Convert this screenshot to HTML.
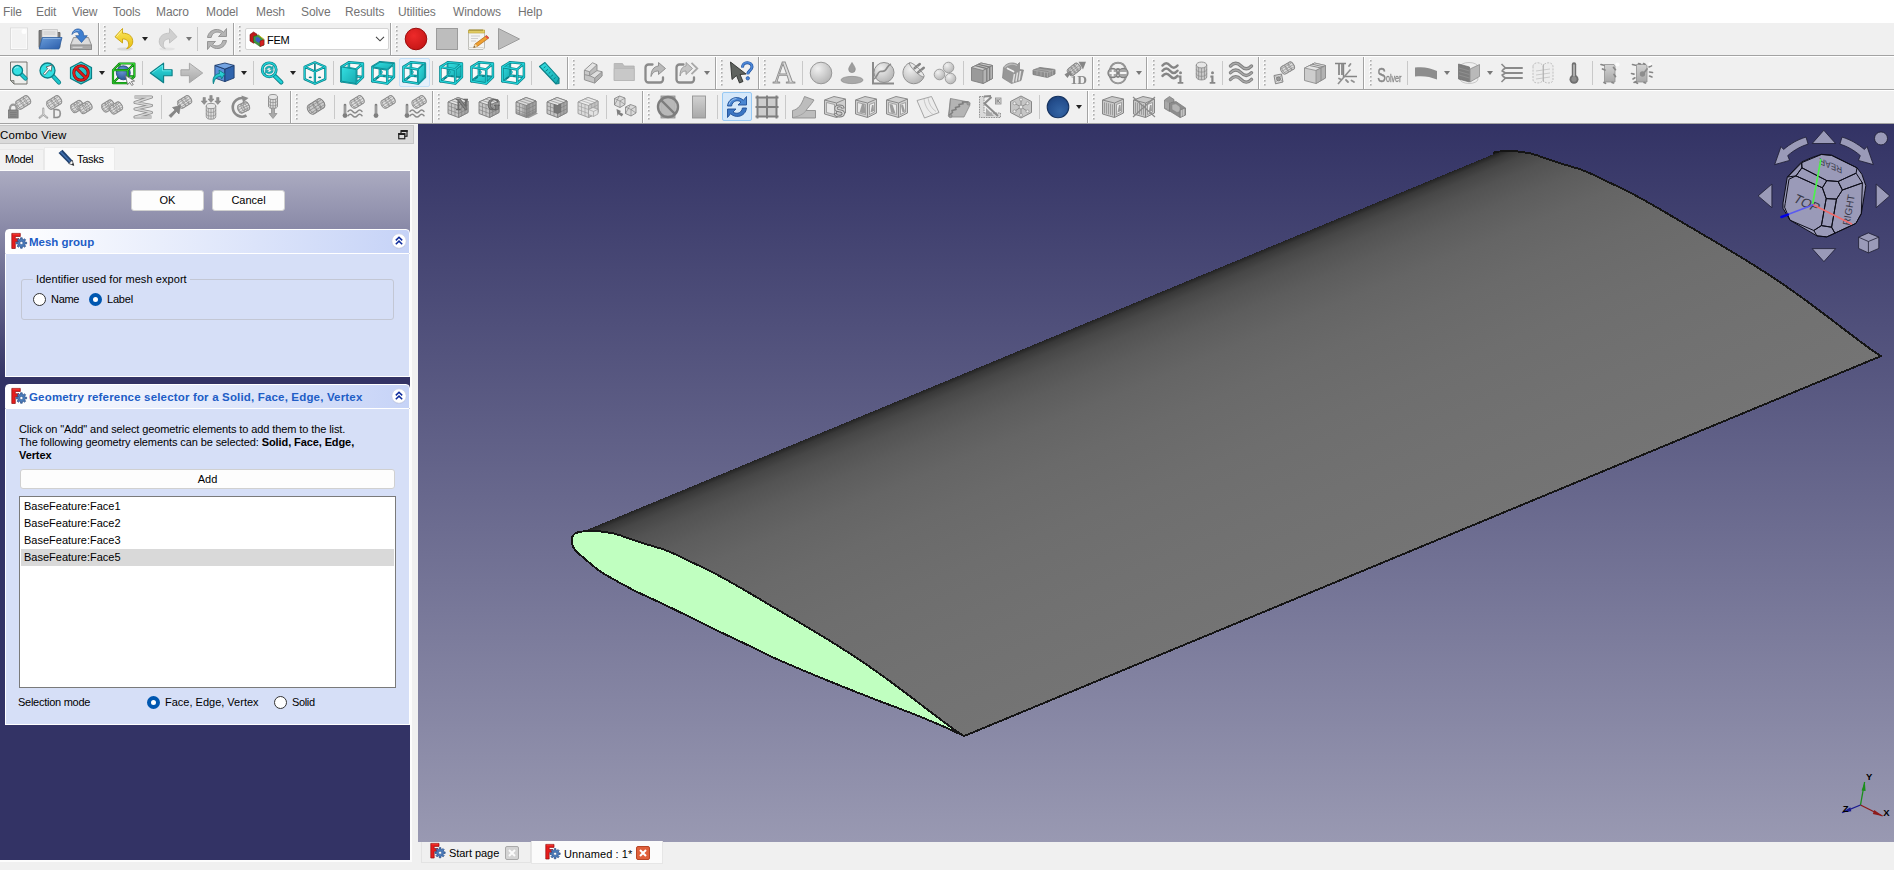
<!DOCTYPE html>
<html><head><meta charset="utf-8"><title>FreeCAD</title>
<style>
html,body{margin:0;padding:0}
body{width:1894px;height:870px;position:relative;overflow:hidden;background:#f0f0f0;font-family:"Liberation Sans",sans-serif;font-size:11px;color:#000}
.abs{position:absolute}
#menubar{position:absolute;left:0;top:0;width:1894px;height:23px;background:#fff}
#menubar span{position:absolute;top:5px;font-size:12px;color:#737373;white-space:nowrap;letter-spacing:-0.1px}
.hline{position:absolute;left:0;width:1894px;height:1px}
.vsep{position:absolute;width:1px;background:#c9c9c9}
.tbend{position:absolute;width:1px;background:#a3a3a3;box-shadow:1px 0 0 #fff}
.handle{position:absolute;width:3px;height:27px}
.ico{position:absolute;width:24px;height:24px;overflow:visible;will-change:transform}
.dd{position:absolute;width:0;height:0;border-left:3.5px solid transparent;border-right:3.5px solid transparent;border-top:4px solid #222}
.dd.g{border-top-color:#777}
.t{position:absolute;white-space:nowrap;line-height:13px}
</style></head><body>
<style>
.btn{position:absolute;box-sizing:border-box;background:#fdfdfd;border:1px solid #d0d0d0;border-radius:3px;text-align:center;line-height:19px;font-size:11px}
.ghead{position:absolute;left:5px;width:405px;height:25px;box-sizing:border-box;border:1px solid #fff;border-radius:4px 4px 0 0;background:linear-gradient(to right,#fff 0,#c6d3f7 100%)}
.ghead span{position:absolute;top:6px;font-weight:bold;color:#215dc6;font-size:11.5px;white-space:nowrap}
.gcont{position:absolute;left:5px;width:405px;box-sizing:border-box;background:#d6dff7;border:1px solid #fff;border-top:none}
.radio{position:absolute;width:13px;height:13px;box-sizing:border-box;border-radius:50%;border:1px solid #333;background:#fff}
.radio.on{border:4px solid #0057b0;background:#fff}
.li{font-size:11px}
</style>
<div id="menubar">
<span style="left:3px">File</span><span style="left:36px">Edit</span><span style="left:72px">View</span><span style="left:113px">Tools</span><span style="left:156px">Macro</span><span style="left:206px">Model</span><span style="left:256px">Mesh</span><span style="left:301px">Solve</span><span style="left:345px">Results</span><span style="left:398px">Utilities</span><span style="left:453px">Windows</span><span style="left:518px">Help</span>
</div>
<div class="hline" style="top:55px;background:#a3a3a3"></div><div class="hline" style="top:56px;background:#fff"></div>
<div class="hline" style="top:89px;background:#a3a3a3"></div><div class="hline" style="top:90px;background:#fff"></div>
<div class="hline" style="top:123px;background:#a3a3a3"></div><div class="hline" style="top:124px;background:#f7f7f7"></div>
<svg width="0" height="0" style="position:absolute"><defs>
<linearGradient id="gCy" x1="0" y1="0" x2="1" y2="1"><stop offset="0" stop-color="#34e0e2"/><stop offset="1" stop-color="#16a9b0"/></linearGradient>
<linearGradient id="gCyV" x1="0" y1="0" x2="0" y2="1"><stop offset="0" stop-color="#34e0e2"/><stop offset="1" stop-color="#12a5ad"/></linearGradient>
<linearGradient id="gBl" x1="0" y1="0" x2="1" y2="1"><stop offset="0" stop-color="#6a9edb"/><stop offset="1" stop-color="#2a5caa"/></linearGradient>
<linearGradient id="gGr" x1="0" y1="0" x2="0" y2="1"><stop offset="0" stop-color="#d2d2d2"/><stop offset="1" stop-color="#a8a8a8"/></linearGradient>
<linearGradient id="gGr2" x1="0" y1="0" x2="1" y2="1"><stop offset="0" stop-color="#e4e4e4"/><stop offset="1" stop-color="#a9a9a9"/></linearGradient>
<linearGradient id="gYe" x1="0" y1="0" x2="0" y2="1"><stop offset="0" stop-color="#fbe75a"/><stop offset="1" stop-color="#e8bd12"/></linearGradient>
<radialGradient id="gRed" cx="0.4" cy="0.35" r="0.7"><stop offset="0" stop-color="#ee2a2a"/><stop offset="1" stop-color="#c41616"/></radialGradient>
<radialGradient id="gSph" cx="0.35" cy="0.3" r="0.75"><stop offset="0" stop-color="#f0f0f0"/><stop offset="1" stop-color="#b4b4b4"/></radialGradient>
<radialGradient id="gBSph" cx="0.6" cy="0.7" r="0.8"><stop offset="0" stop-color="#3465a4"/><stop offset="0.6" stop-color="#25508f"/><stop offset="1" stop-color="#1b3f78"/></radialGradient>
<radialGradient id="gBSph2" cx="0.4" cy="0.35" r="0.7"><stop offset="0" stop-color="#6f9bd8"/><stop offset="1" stop-color="#24508f"/></radialGradient>
</defs></svg>
<svg class="ico" style="left:7px;top:27px" viewBox="0 0 24 24"><rect x="3.5" y="1" width="17" height="21.5" fill="#f3f3f3" stroke="#dcdcdc"/><rect x="4.5" y="2" width="15" height="19.5" fill="none" stroke="#fafafa"/><circle cx="17" cy="4.5" r="2.5" fill="#fff" opacity=".9"/></svg>
<svg class="ico" style="left:38px;top:27px" viewBox="0 0 24 24"><path d="M1 3.5h7l1.5 2H22v15H1z" fill="#7d7d7d" stroke="#5f5f5f" stroke-width=".8"/><path d="M4 2.5h15.5v14H4z" fill="#e6e6e6" stroke="#b5b5b5" stroke-width=".6"/><path d="M5.5 5h12M5.5 7h12" stroke="#c4c4c4" stroke-width=".8"/><path d="M4.2 10.5H24l-3 11.5H1.2z" fill="url(#gBl)" stroke="#2f5f9f" stroke-width=".8"/><path d="M5 11.5h17.6" stroke="#9cc0ea" stroke-width=".8"/></svg>
<svg class="ico" style="left:69px;top:27px" viewBox="0 0 24 24"><path d="M4.5 10.5h15L22.5 18v4.5h-21V18z" fill="#cfcfcf" stroke="#8e8e8e" stroke-width=".9"/><path d="M1.5 18h21v4.5h-21z" fill="#a9a9a9" stroke="#8a8a8a" stroke-width=".9"/><path d="M3.5 20.3h10" stroke="#ddd" stroke-width="1"/><path d="M5.5 11.5h13l2.3 5.5H3.2z" fill="#dcdcdc"/><path d="M3 7.5C3.5 3 8 0.8 11.5 2.5c2.3 1.2 3.2 3.3 3.2 6.2h3.6L12.5 15.5 6.6 8.7h3.6c0-2.3-1-3.7-2.7-3.7C5.6 5 4 6 3 7.5z" fill="#3f7fd0" stroke="#285a9e" stroke-width=".7"/><path d="M4.5 5.5C6 3.5 8.5 3 10.5 3.8" stroke="#8db6ea" stroke-width=".8" fill="none"/></svg>
<div class="tbend" style="left:98px;top:23px;height:32px"></div>
<svg class="handle" style="left:103px;top:25px" viewBox="0 0 3 27" ><rect x="0" y="0" width="2" height="2" fill="#fbfbfb"/><rect x="1" y="1" width="1.600" height="1.600" fill="#adadad"/><rect x="0" y="4" width="2" height="2" fill="#fbfbfb"/><rect x="1" y="5" width="1.600" height="1.600" fill="#adadad"/><rect x="0" y="8" width="2" height="2" fill="#fbfbfb"/><rect x="1" y="9" width="1.600" height="1.600" fill="#adadad"/><rect x="0" y="12" width="2" height="2" fill="#fbfbfb"/><rect x="1" y="13" width="1.600" height="1.600" fill="#adadad"/><rect x="0" y="16" width="2" height="2" fill="#fbfbfb"/><rect x="1" y="17" width="1.600" height="1.600" fill="#adadad"/><rect x="0" y="20" width="2" height="2" fill="#fbfbfb"/><rect x="1" y="21" width="1.600" height="1.600" fill="#adadad"/><rect x="0" y="24" width="2" height="2" fill="#fbfbfb"/><rect x="1" y="25" width="1.600" height="1.600" fill="#adadad"/></svg>
<svg class="ico" style="left:111.7px;top:27px" viewBox="0 0 24 24"><ellipse cx="13" cy="22" rx="8" ry="1.6" fill="#000" opacity=".1"/><path d="M10.5 1.5 3 9.8l7.5 6.2v-4c3.5-.3 6 1.5 6.2 5.2.1 1.8-.6 3.3-2 4.5 4.3-1.3 6.3-4.2 6-8-.4-4.7-4.3-7.6-10.200-7.500z" fill="url(#gYe)" stroke="#c9a109" stroke-width=".9" stroke-linejoin="round"/><path d="M10 3.300 4.500 9.700" stroke="#fff6a8" stroke-width=".8"/></svg>
<div class="dd" style="left:142px;top:37px"></div>
<svg class="ico" style="left:155.5px;top:27px" viewBox="0 0 24 24"><g transform="translate(24,0) scale(-1,1)" opacity=".9"><ellipse cx="13" cy="22" rx="8" ry="1.6" fill="#000" opacity=".06"/><path d="M10.5 1.5 3 9.8l7.5 6.2v-4c3.5-.3 6 1.5 6.2 5.2.1 1.8-.6 3.3-2 4.500 4.300-1.300 6.300-4.200 6-8-.4-4.700-4.300-7.600-10.200-7.500z" fill="#cdcdcd" stroke="#b9b9b9" stroke-width=".9" stroke-linejoin="round"/></g></svg>
<div class="dd g" style="left:185.5px;top:37px"></div>
<div class="vsep" style="left:197px;top:27px;height:24px"></div>
<svg class="ico" style="left:204.8px;top:27px" viewBox="0 0 24 24"><path d="M21.500 1.500v8h-8l2.900-2.900c-2.600-2.300-6.700-1.900-8.900.9-.7.900-1.100 1.900-1.300 3H2.500C3 6.500 6 3.300 10 2.600c3.200-.6 6.300.5 8.600 2.700z" fill="#b4b4b4" stroke="#8f8f8f" stroke-width=".9" stroke-linejoin="round"/><path d="M2.500 22.500v-8h8l-2.900 2.900c2.600 2.300 6.700 1.900 8.900-.9.700-.9 1.100-1.900 1.300-3h3.700c-.5 4-3.500 7.200-7.500 7.900-3.200.6-6.300-.5-8.600-2.700z" fill="#b4b4b4" stroke="#8f8f8f" stroke-width=".9" stroke-linejoin="round"/></svg>
<div class="tbend" style="left:233px;top:23px;height:32px"></div>
<svg class="handle" style="left:238px;top:25px" viewBox="0 0 3 27" ><rect x="0" y="0" width="2" height="2" fill="#fbfbfb"/><rect x="1" y="1" width="1.600" height="1.600" fill="#adadad"/><rect x="0" y="4" width="2" height="2" fill="#fbfbfb"/><rect x="1" y="5" width="1.600" height="1.600" fill="#adadad"/><rect x="0" y="8" width="2" height="2" fill="#fbfbfb"/><rect x="1" y="9" width="1.600" height="1.600" fill="#adadad"/><rect x="0" y="12" width="2" height="2" fill="#fbfbfb"/><rect x="1" y="13" width="1.600" height="1.600" fill="#adadad"/><rect x="0" y="16" width="2" height="2" fill="#fbfbfb"/><rect x="1" y="17" width="1.600" height="1.600" fill="#adadad"/><rect x="0" y="20" width="2" height="2" fill="#fbfbfb"/><rect x="1" y="21" width="1.600" height="1.600" fill="#adadad"/><rect x="0" y="24" width="2" height="2" fill="#fbfbfb"/><rect x="1" y="25" width="1.600" height="1.600" fill="#adadad"/></svg>
<div class="abs" style="left:245px;top:28px;width:144px;height:22px;box-sizing:border-box;background:#fff;border:1px solid #d4d4d4;border-radius:2px"></div>
<svg class="abs" style="left:249px;top:31px" width="16" height="16" viewBox="0 0 16 16"><path d="M1 3.500 4.500 1 8 3.200v7L4.500 12.200 1 10z" fill="#c01818" stroke="#7a0c0c" stroke-width=".6"/><path d="M4.500 5.500 9.500 4l5.500 4.500v5.500l-4 1.500L4.500 11z" fill="#3d9a3d" stroke="#1f5a1f" stroke-width=".5"/><path d="M6.500 6.500 9 6l2.500 2v3l-2 .8-3-2z" fill="#3a62c4"/><path d="M11 10l4-1.500v5.500l-4 1.500z" fill="#d42020" stroke="#7a0c0c" stroke-width=".5"/><path d="M9.500 4 15 8.500" stroke="#e8c020" stroke-width=".8"/></svg>
<div class="t" style="left:267px;top:34px;font-size:11px;letter-spacing:-.25px">FEM</div>
<svg class="abs" style="left:375px;top:35px" width="10" height="8" viewBox="0 0 10 8"><path d="M1 1.800 5 5.800 9 1.800" fill="none" stroke="#444" stroke-width="1.100"/></svg>
<div class="tbend" style="left:390px;top:23px;height:32px"></div>
<svg class="handle" style="left:395px;top:25px" viewBox="0 0 3 27" ><rect x="0" y="0" width="2" height="2" fill="#fbfbfb"/><rect x="1" y="1" width="1.600" height="1.600" fill="#adadad"/><rect x="0" y="4" width="2" height="2" fill="#fbfbfb"/><rect x="1" y="5" width="1.600" height="1.600" fill="#adadad"/><rect x="0" y="8" width="2" height="2" fill="#fbfbfb"/><rect x="1" y="9" width="1.600" height="1.600" fill="#adadad"/><rect x="0" y="12" width="2" height="2" fill="#fbfbfb"/><rect x="1" y="13" width="1.600" height="1.600" fill="#adadad"/><rect x="0" y="16" width="2" height="2" fill="#fbfbfb"/><rect x="1" y="17" width="1.600" height="1.600" fill="#adadad"/><rect x="0" y="20" width="2" height="2" fill="#fbfbfb"/><rect x="1" y="21" width="1.600" height="1.600" fill="#adadad"/><rect x="0" y="24" width="2" height="2" fill="#fbfbfb"/><rect x="1" y="25" width="1.600" height="1.600" fill="#adadad"/></svg>
<svg class="ico" style="left:404px;top:27px" viewBox="0 0 24 24"><circle cx="12" cy="12" r="10.800" fill="url(#gRed)" stroke="#990d0d" stroke-width="1"/></svg>
<svg class="ico" style="left:435px;top:27px" viewBox="0 0 24 24"><rect x="1.500" y="1.500" width="21" height="21" fill="#bdbdbd" stroke="#9b9b9b" stroke-width="1"/></svg>
<svg class="ico" style="left:466.3px;top:27px" viewBox="0 0 24 24"><path d="M2.500 3.500h16v17.500l-1.500 1.500H2.500z" fill="#f4f4f2" stroke="#b9b9b3" stroke-width=".9"/><path d="M2.500 3h16v3h-16z" fill="#e8d36a" stroke="#b59a2c" stroke-width=".6"/><path d="M4 2.200v2M6 2.200v2M8 2.200v2M10 2.200v2M12 2.200v2M14 2.200v2M16 2.200v2" stroke="#7c6a1c" stroke-width=".8"/><path d="M5 9h9M5 11.500h7M5 14h5" stroke="#c9c9c9" stroke-width=".9"/><path d="M2.500 20.500h15" stroke="#d8d8d2" stroke-width="1"/><path d="M20.500 8.500 23 10.800 11.500 19.300l-3.800 1.200 1.300-3.500z" fill="#f0a030" stroke="#a86414" stroke-width=".7" stroke-linejoin="round"/><path d="M20.500 8.500 23 10.800l-1.500 1.100-2.400-2.300z" fill="#e24a4a"/><path d="M7.700 20.500l1.300-3.500 2.500 2.300z" fill="#f3dfb2"/><path d="M7.700 20.500l.5-1.400 1 .9z" fill="#333"/></svg>
<svg class="ico" style="left:497px;top:27px" viewBox="0 0 24 24"><path d="M1.500 1.500 22.500 12 1.500 22.500z" fill="#bcbcbc" stroke="#9c9c9c" stroke-width="1" stroke-linejoin="round"/></svg>
<svg class="ico" style="left:7px;top:61px" viewBox="0 0 24 24"><path d="M3.500 1h16.500v22H7L3.500 19.500z" fill="#eeeeec" stroke="#666863" stroke-width=".9"/><path d="M3.500 19.500H7V23z" fill="#b9b9b5" stroke="#666863" stroke-width=".7"/><path d="M14 13 L18.5 17.5" stroke="#0b7f86" stroke-width="4.200" stroke-linecap="round"/><path d="M14 13 L18.5 17.5" stroke="#1cc5ca" stroke-width="2.600" stroke-linecap="round"/><circle cx="10.5" cy="9.5" r="5" fill="#34e0e2" stroke="#0b7f86" stroke-width="1.300"/><path d="M7.500 7.500a4 4 0 0 1 4-1.500" stroke="#b8f4f5" stroke-width="1" fill="none"/></svg>
<svg class="ico" style="left:38px;top:61px" viewBox="0 0 24 24"><path d="M14.75 14.75 L21 21.5" stroke="#0b7f86" stroke-width="4.200" stroke-linecap="round"/><path d="M14.75 14.75 L21 21.5" stroke="#1cc5ca" stroke-width="2.600" stroke-linecap="round"/><circle cx="9.5" cy="9.5" r="7.5" fill="#34e0e2" stroke="#0b7f86" stroke-width="1.300"/><path d="M14 4 13.200 10.300 11.300 8.800 6.800 14 5.300 12.700 9.800 7.500 8 6z" fill="#fff" stroke="#555" stroke-width=".8" stroke-linejoin="round"/></svg>
<svg class="ico" style="left:69px;top:61px" viewBox="0 0 24 24"><path d="M12 1 22.500 6.500v11L12 23 1.500 17.500v-11z" fill="url(#gCy)" stroke="#0b7f86" stroke-width="1.200" stroke-linejoin="round"/><path d="M12 2.500 21 7.300v9.400L12 21.500 3 16.700V7.300z" fill="none" stroke="#5eeaec" stroke-width=".6"/><circle cx="12" cy="12" r="7.200" fill="none" stroke="#7d0b0b" stroke-width="3"/><path d="M6.900 6.900 17.100 17.100" stroke="#7d0b0b" stroke-width="3"/><circle cx="12" cy="12" r="7.200" fill="none" stroke="#e31c1c" stroke-width="1.800"/><path d="M6.900 6.900 17.100 17.100" stroke="#e31c1c" stroke-width="1.800"/></svg>
<div class="dd" style="left:99px;top:71px"></div>
<svg class="ico" style="left:112.4px;top:61px" viewBox="0 0 24 24"><path d="M1 9.200 7.500 2.500H22.400V15.400L15.800 22.100H1z" fill="#fff" opacity=".55"/><path d="M7.500 2.500V15.400H22.400M7.500 15.400 1 22.100" fill="none" stroke="#0b7a0b" stroke-width="2.200" stroke-linejoin="round"/><path d="M7.500 2.500V15.400H22.400M7.500 15.400 1 22.100" fill="none" stroke="#35dc35" stroke-width=".9" stroke-linejoin="round"/><circle cx="11.300" cy="11.800" r="7" fill="url(#gBSph2)" stroke="#1b3f78" stroke-width=".8"/><path d="M1 9.200H15.800V22.100H1zM1 9.200 7.500 2.500H22.400L15.800 9.200M22.400 2.500V15.400L15.800 22.100" fill="none" stroke="#0b7a0b" stroke-width="2.200" stroke-linejoin="round"/><path d="M1 9.200H15.800V22.100H1zM1 9.200 7.500 2.500H22.400L15.800 9.200M22.400 2.500V15.400L15.800 22.100" fill="none" stroke="#35dc35" stroke-width=".9" stroke-linejoin="round"/><path d="M13.500 14.500 22.600 20 19.200 20.600 21.300 23.600 19.700 24.400 17.700 21.400 15.600 23.700z" fill="#f6f6f6" stroke="#6b6b6b" stroke-width=".8" stroke-linejoin="round"/></svg>
<div class="vsep" style="left:142px;top:61px;height:24px"></div>
<svg class="ico" style="left:149px;top:61px" viewBox="0 0 24 24"><path d="M1.300 12 14.600 2.200V8.800H23.100V14.700H14.600V21.800z" fill="url(#gCyV)" stroke="#0b7f86" stroke-width="1.100" stroke-linejoin="round"/><path d="M3.300 11.800 13.600 4.300V9.800H22" fill="none" stroke="#7af0f2" stroke-width=".7"/></svg>
<svg class="ico" style="left:179.8px;top:61px" viewBox="0 0 24 24"><path d="M22.700 12 9.400 2.200V8.800H.9V14.700H9.400V21.800z" fill="url(#gGr)" stroke="#a6a6a6" stroke-width="1" stroke-linejoin="round"/></svg>
<svg class="ico" style="left:210.7px;top:61px" viewBox="0 0 24 24"><path d="M3.900 4.400 13.900 8.100V20.600L3.900 17z" fill="#5b90d8" stroke="#1b3a6b" stroke-width=".9" stroke-linejoin="round"/><path d="M13.900 8.100 23.100 4.400V17L13.900 20.600z" fill="#2f64ad" stroke="#1b3a6b" stroke-width=".9" stroke-linejoin="round"/><path d="M3.900 4.400 13.900 2 23.100 4.400 13.900 8.100z" fill="#74a4e2" stroke="#1b3a6b" stroke-width=".9" stroke-linejoin="round"/><path d="M2.400 22.800C1 17 3.500 13.200 8.500 12.500L8 9.200 13.700 12.900 10.600 18 9.800 15.200C6 15.500 3.500 18 2.400 22.800z" fill="url(#gCyV)" stroke="#0b7f86" stroke-width=".9" stroke-linejoin="round"/></svg>
<div class="dd" style="left:241px;top:71px"></div>
<div class="vsep" style="left:253px;top:61px;height:24px"></div>
<svg class="ico" style="left:259.7px;top:61px" viewBox="0 0 24 24"><path d="M14.500 14.700 21.300 21.300" stroke="#0b7f86" stroke-width="4.400" stroke-linecap="round"/><path d="M14.500 14.700 21.300 21.300" stroke="#1fd0d5" stroke-width="2.600" stroke-linecap="round"/><circle cx="9.200" cy="8.800" r="7" fill="#eef3f3" stroke="#0b7f86" stroke-width="2.800"/><circle cx="9.200" cy="8.800" r="7" fill="none" stroke="#1fd0d5" stroke-width="1.400"/><path d="M5 8.300c.3-2.200 2.200-3.500 4.500-3.300 1 .1 1.700.4 2.400 1l1.300-1v3.500H9.800l1.100-1.100c-1.400-1-3.300-.6-3.900 1.200zM13.400 9.500c-.3 2.200-2.200 3.500-4.500 3.300-1-.1-1.700-.4-2.400-1l-1.300 1V9.300h3.400l-1.100 1.100c1.400 1 3.300.6 3.900-1.200z" fill="#14b4ba" stroke="#0b7f86" stroke-width=".4"/></svg>
<div class="dd" style="left:289.7px;top:71px"></div>
<svg class="ico" style="left:303px;top:61px" viewBox="0 0 24 24"><path d="M11.900 1.300 22.300 5.700V18.100L11.900 22.800 1.600 18.100V5.700z" fill="#fff" opacity=".55"/><path d="M11.900 2.500V10" stroke="#0b7f86" stroke-width="1.700"/><path d="M11.900 1.300 22.300 5.700V18.100L11.900 22.800 1.600 18.100V5.700zM1.600 5.700 11.900 10.500 22.300 5.700M11.900 10.500V22.800" stroke="#0b7f86" stroke-width="2.300" stroke-linejoin="round" fill="none"/><path d="M11.900 1.300 22.300 5.700V18.100L11.900 22.800 1.600 18.100V5.700zM1.600 5.700 11.900 10.500 22.300 5.700M11.900 10.500V22.800" stroke="#22d3d8" stroke-width="1" stroke-linejoin="round" fill="none"/><ellipse cx="7.300" cy="16.300" rx="1.600" ry=".9" fill="#0b7f86"/><ellipse cx="16.600" cy="16.300" rx="1.600" ry=".9" fill="#0b7f86"/></svg>
<div class="vsep" style="left:333px;top:61px;height:24px"></div>
<svg class="ico" style="left:339.8px;top:61px" viewBox="0 0 24 24"><path d="M1.4 5.9 8.9 1.3 22.9 2.5 22.9 16 16.2 22.6 1.4 20.2z" fill="#fff" opacity=".6"/><path d="M8.9 1.3 8.9 14.6M8.9 14.6 22.9 16M8.9 14.6 1.4 20.2" stroke="#0b7f86" stroke-width="2.500" stroke-linejoin="round" stroke-linecap="round" fill="none"/><path d="M8.9 1.3 8.9 14.6M8.9 14.6 22.9 16M8.9 14.6 1.4 20.2" stroke="#22d3d8" stroke-width="1.200" stroke-linejoin="round" stroke-linecap="round" fill="none"/><path d="M1.4 5.9 16.2 8.4 16.2 22.6 1.4 20.2zM1.4 5.9 8.9 1.3 22.9 2.5 16.2 8.4zM16.2 8.4 22.9 2.5 22.9 16 16.2 22.6z" stroke="#0b7f86" stroke-width="2.500" stroke-linejoin="round" stroke-linecap="round" fill="none"/><path d="M1.4 5.9 16.2 8.4 16.2 22.6 1.4 20.2zM1.4 5.9 8.9 1.3 22.9 2.5 16.2 8.4zM16.2 8.4 22.9 2.5 22.9 16 16.2 22.6z" stroke="#22d3d8" stroke-width="1.200" stroke-linejoin="round" stroke-linecap="round" fill="none"/><path d="M1.4 5.9 16.2 8.4 16.2 22.6 1.4 20.2z" fill="url(#gCy)" stroke="#0b7f86" stroke-width=".8" stroke-linejoin="round"/></svg>
<svg class="ico" style="left:371px;top:61px" viewBox="0 0 24 24"><path d="M1.4 5.9 8.9 1.3 22.9 2.5 22.9 16 16.2 22.6 1.4 20.2z" fill="#fff" opacity=".6"/><path d="M8.9 1.3 8.9 14.6M8.9 14.6 22.9 16M8.9 14.6 1.4 20.2" stroke="#0b7f86" stroke-width="2.500" stroke-linejoin="round" stroke-linecap="round" fill="none"/><path d="M8.9 1.3 8.9 14.6M8.9 14.6 22.9 16M8.9 14.6 1.4 20.2" stroke="#22d3d8" stroke-width="1.200" stroke-linejoin="round" stroke-linecap="round" fill="none"/><ellipse cx="10.300" cy="11.200" rx=".9" ry="1.700" fill="#22d3d8" stroke="#0b7f86" stroke-width=".7"/><path d="M5.300 17.700 7.300 16.300" stroke="#0b7f86" stroke-width="1.500" stroke-linecap="round"/><path d="M12 15.200h2.300" stroke="#0b7f86" stroke-width="1.400"/><path d="M1.4 5.9 16.2 8.4 16.2 22.6 1.4 20.2zM1.4 5.9 8.9 1.3 22.9 2.5 16.2 8.4zM16.2 8.4 22.9 2.5 22.9 16 16.2 22.6z" stroke="#0b7f86" stroke-width="2.500" stroke-linejoin="round" stroke-linecap="round" fill="none"/><path d="M1.4 5.9 16.2 8.4 16.2 22.6 1.4 20.2zM1.4 5.9 8.9 1.3 22.9 2.5 16.2 8.4zM16.2 8.4 22.9 2.5 22.9 16 16.2 22.6z" stroke="#22d3d8" stroke-width="1.200" stroke-linejoin="round" stroke-linecap="round" fill="none"/><path d="M1.4 5.9 8.9 1.3 22.9 2.5 16.2 8.4z" fill="url(#gCy)" stroke="#0b7f86" stroke-width=".8" stroke-linejoin="round"/></svg>
<div class="abs" style="left:398.7px;top:58px;width:31px;height:29px;box-sizing:border-box;background:#e4f0fb;border:1px solid #c4e0f8;border-radius:2px"></div>
<svg class="ico" style="left:402px;top:61px" viewBox="0 0 24 24"><path d="M1.4 5.9 8.9 1.3 22.9 2.5 22.9 16 16.2 22.6 1.4 20.2z" fill="#fff" opacity=".6"/><path d="M8.9 1.3 8.9 14.6M8.9 14.6 22.9 16M8.9 14.6 1.4 20.2" stroke="#0b7f86" stroke-width="2.500" stroke-linejoin="round" stroke-linecap="round" fill="none"/><path d="M8.9 1.3 8.9 14.6M8.9 14.6 22.9 16M8.9 14.6 1.4 20.2" stroke="#22d3d8" stroke-width="1.200" stroke-linejoin="round" stroke-linecap="round" fill="none"/><ellipse cx="10.300" cy="11.200" rx=".9" ry="1.700" fill="#22d3d8" stroke="#0b7f86" stroke-width=".7"/><path d="M5.300 17.700 7.300 16.300" stroke="#0b7f86" stroke-width="1.500" stroke-linecap="round"/><path d="M12 15.200h2.300" stroke="#0b7f86" stroke-width="1.400"/><path d="M1.4 5.9 16.2 8.4 16.2 22.6 1.4 20.2zM1.4 5.9 8.9 1.3 22.9 2.5 16.2 8.4zM16.2 8.4 22.9 2.5 22.9 16 16.2 22.6z" stroke="#0b7f86" stroke-width="2.500" stroke-linejoin="round" stroke-linecap="round" fill="none"/><path d="M1.4 5.9 16.2 8.4 16.2 22.6 1.4 20.2zM1.4 5.9 8.9 1.3 22.9 2.5 16.2 8.4zM16.2 8.4 22.9 2.5 22.9 16 16.2 22.6z" stroke="#22d3d8" stroke-width="1.200" stroke-linejoin="round" stroke-linecap="round" fill="none"/><path d="M16.2 8.4 22.9 2.5 22.9 16 16.2 22.6z" fill="url(#gCy)" stroke="#0b7f86" stroke-width=".8" stroke-linejoin="round"/></svg>
<div class="vsep" style="left:432px;top:61px;height:24px"></div>
<svg class="ico" style="left:438.6px;top:61px" viewBox="0 0 24 24"><path d="M1.4 5.9 8.9 1.3 22.9 2.5 22.9 16 16.2 22.6 1.4 20.2z" fill="#fff" opacity=".6"/><path d="M8.9 1.3 8.9 14.6M8.9 14.6 22.9 16M8.9 14.6 1.4 20.2" stroke="#0b7f86" stroke-width="2.500" stroke-linejoin="round" stroke-linecap="round" fill="none"/><path d="M8.9 1.3 8.9 14.6M8.9 14.6 22.9 16M8.9 14.6 1.4 20.2" stroke="#22d3d8" stroke-width="1.200" stroke-linejoin="round" stroke-linecap="round" fill="none"/><path d="M8.9 1.3 22.9 2.5 22.9 16 8.9 14.6z" fill="url(#gCy)" stroke="#0b7f86" stroke-width=".8" stroke-linejoin="round"/><ellipse cx="10.300" cy="11.200" rx=".9" ry="1.700" fill="#22d3d8" stroke="#0b7f86" stroke-width=".7"/><path d="M5.300 17.700 7.300 16.300" stroke="#0b7f86" stroke-width="1.500" stroke-linecap="round"/><path d="M12 15.200h2.300" stroke="#0b7f86" stroke-width="1.400"/><path d="M1.4 5.9 16.2 8.4 16.2 22.6 1.4 20.2zM1.4 5.9 8.9 1.3 22.9 2.5 16.2 8.4zM16.2 8.4 22.9 2.5 22.9 16 16.2 22.6z" stroke="#0b7f86" stroke-width="2.500" stroke-linejoin="round" stroke-linecap="round" fill="none"/><path d="M1.4 5.9 16.2 8.4 16.2 22.6 1.4 20.2zM1.4 5.9 8.9 1.3 22.9 2.5 16.2 8.4zM16.2 8.4 22.9 2.5 22.9 16 16.2 22.6z" stroke="#22d3d8" stroke-width="1.200" stroke-linejoin="round" stroke-linecap="round" fill="none"/></svg>
<svg class="ico" style="left:469.8px;top:61px" viewBox="0 0 24 24"><path d="M1.4 5.9 8.9 1.3 22.9 2.5 22.9 16 16.2 22.6 1.4 20.2z" fill="#fff" opacity=".6"/><path d="M8.9 1.3 8.9 14.6M8.9 14.6 22.9 16M8.9 14.6 1.4 20.2" stroke="#0b7f86" stroke-width="2.500" stroke-linejoin="round" stroke-linecap="round" fill="none"/><path d="M8.9 1.3 8.9 14.6M8.9 14.6 22.9 16M8.9 14.6 1.4 20.2" stroke="#22d3d8" stroke-width="1.200" stroke-linejoin="round" stroke-linecap="round" fill="none"/><path d="M1.4 20.2 8.9 14.6 22.9 16 16.2 22.6z" fill="url(#gCy)" stroke="#0b7f86" stroke-width=".8" stroke-linejoin="round"/><ellipse cx="10.300" cy="11.200" rx=".9" ry="1.700" fill="#22d3d8" stroke="#0b7f86" stroke-width=".7"/><path d="M5.300 17.700 7.300 16.300" stroke="#0b7f86" stroke-width="1.500" stroke-linecap="round"/><path d="M12 15.200h2.300" stroke="#0b7f86" stroke-width="1.400"/><path d="M1.4 5.9 16.2 8.4 16.2 22.6 1.4 20.2zM1.4 5.9 8.9 1.3 22.9 2.5 16.2 8.4zM16.2 8.4 22.9 2.5 22.9 16 16.2 22.6z" stroke="#0b7f86" stroke-width="2.500" stroke-linejoin="round" stroke-linecap="round" fill="none"/><path d="M1.4 5.9 16.2 8.4 16.2 22.6 1.4 20.2zM1.4 5.9 8.9 1.3 22.9 2.5 16.2 8.4zM16.2 8.4 22.9 2.5 22.9 16 16.2 22.6z" stroke="#22d3d8" stroke-width="1.200" stroke-linejoin="round" stroke-linecap="round" fill="none"/></svg>
<svg class="ico" style="left:501px;top:61px" viewBox="0 0 24 24"><path d="M1.4 5.9 8.9 1.3 22.9 2.5 22.9 16 16.2 22.6 1.4 20.2z" fill="#fff" opacity=".6"/><path d="M8.9 1.3 8.9 14.6M8.9 14.6 22.9 16M8.9 14.6 1.4 20.2" stroke="#0b7f86" stroke-width="2.500" stroke-linejoin="round" stroke-linecap="round" fill="none"/><path d="M8.9 1.3 8.9 14.6M8.9 14.6 22.9 16M8.9 14.6 1.4 20.2" stroke="#22d3d8" stroke-width="1.200" stroke-linejoin="round" stroke-linecap="round" fill="none"/><path d="M1.4 5.9 8.9 1.3 8.9 14.6 1.4 20.2z" fill="url(#gCy)" stroke="#0b7f86" stroke-width=".8" stroke-linejoin="round"/><ellipse cx="10.300" cy="11.200" rx=".9" ry="1.700" fill="#22d3d8" stroke="#0b7f86" stroke-width=".7"/><path d="M5.300 17.700 7.300 16.300" stroke="#0b7f86" stroke-width="1.500" stroke-linecap="round"/><path d="M12 15.200h2.300" stroke="#0b7f86" stroke-width="1.400"/><path d="M1.4 5.9 16.2 8.4 16.2 22.6 1.4 20.2zM1.4 5.9 8.9 1.3 22.9 2.5 16.2 8.4zM16.2 8.4 22.9 2.5 22.9 16 16.2 22.6z" stroke="#0b7f86" stroke-width="2.500" stroke-linejoin="round" stroke-linecap="round" fill="none"/><path d="M1.4 5.9 16.2 8.4 16.2 22.6 1.4 20.2zM1.4 5.9 8.9 1.3 22.9 2.5 16.2 8.4zM16.2 8.4 22.9 2.5 22.9 16 16.2 22.6z" stroke="#22d3d8" stroke-width="1.200" stroke-linejoin="round" stroke-linecap="round" fill="none"/></svg>
<div class="vsep" style="left:531px;top:61px;height:24px"></div>
<svg class="ico" style="left:536.6px;top:61px" viewBox="0 0 24 24"><path d="M2.500 5.500 8 1.500 22 17v5.500l-3 .5z" fill="url(#gCy)" stroke="#0b7f86" stroke-width="1.100" stroke-linejoin="round"/><path d="M19 23l3-5.800" stroke="#0b7f86" stroke-width=".9"/><path d="M8.500 5.500 6.700 7M11 8.300 8.500 10.300M13.500 11 11.700 12.500M16 13.800 13.500 15.800M18.500 16.600 16.700 18" stroke="#0b7f86" stroke-width="1"/></svg>
<div class="tbend" style="left:567px;top:57px;height:32px"></div>
<svg class="handle" style="left:572px;top:59px" viewBox="0 0 3 27" ><rect x="0" y="0" width="2" height="2" fill="#fbfbfb"/><rect x="1" y="1" width="1.600" height="1.600" fill="#adadad"/><rect x="0" y="4" width="2" height="2" fill="#fbfbfb"/><rect x="1" y="5" width="1.600" height="1.600" fill="#adadad"/><rect x="0" y="8" width="2" height="2" fill="#fbfbfb"/><rect x="1" y="9" width="1.600" height="1.600" fill="#adadad"/><rect x="0" y="12" width="2" height="2" fill="#fbfbfb"/><rect x="1" y="13" width="1.600" height="1.600" fill="#adadad"/><rect x="0" y="16" width="2" height="2" fill="#fbfbfb"/><rect x="1" y="17" width="1.600" height="1.600" fill="#adadad"/><rect x="0" y="20" width="2" height="2" fill="#fbfbfb"/><rect x="1" y="21" width="1.600" height="1.600" fill="#adadad"/><rect x="0" y="24" width="2" height="2" fill="#fbfbfb"/><rect x="1" y="25" width="1.600" height="1.600" fill="#adadad"/></svg>
<svg class="ico" style="left:580.9px;top:61px" viewBox="0 0 24 24"><path d="M3.400 9.200 11.500 1.800 16 3.700 8.600 10.700z" fill="#e4e4e4"/><path d="M3.400 9.200 8.600 10.700V14.700L3.400 13.600z" fill="#c9c9c9"/><path d="M8.600 10.700 16 3.700V9.600L8.600 14.700z" fill="#bbb"/><path d="M8.600 14.700 16 9.600 21.100 10.700 13.700 17z" fill="#dedede"/><path d="M3.400 13.600 8.600 14.700 13.700 17V22.100L3.400 18.800z" fill="#c4c4c4"/><path d="M13.700 17 21.100 10.700V15.100L13.700 22.100z" fill="#b0b0b0"/><path d="M3.400 9.200 11.500 1.800 16 3.700V9.600L21.100 10.700V15.100L13.700 22.100 3.400 18.800zM3.400 9.200 8.600 10.700 16 3.700M8.600 10.700V14.700L16 9.600M3.400 13.600 8.600 14.700 13.700 17 21.100 10.700M13.700 17V22.100" fill="none" stroke="#8b8b8b" stroke-width=".9" stroke-linejoin="round"/></svg>
<svg class="ico" style="left:611.6px;top:61px" viewBox="0 0 24 24"><path d="M2.200 2.500h8.300l1.500 2.500h10.200v14.500h-20z" fill="#bdbdbd" stroke="#b0b0b0" stroke-width=".8"/><path d="M2.200 7.500h20v12h-20z" fill="#c8c8c8" stroke="#b4b4b4" stroke-width=".7"/></svg>
<svg class="ico" style="left:642.7px;top:61px" viewBox="0 0 24 24"><path d="M9.500 3.500H5.500a3 3 0 0 0-3 3V18.500a3 3 0 0 0 3 3H17a3 3 0 0 0 3-3V16.500" fill="none" stroke="#8a8a8a" stroke-width="2.300" stroke-linecap="round"/><path d="M15.500 1.500 22.500 7.500 15.500 13.500V10c-4 0-6 1.500-7.500 5.500 0-6 2.500-10 7.500-10.500z" fill="#b9b9b9" stroke="#8a8a8a" stroke-width=".9" stroke-linejoin="round"/></svg>
<svg class="ico" style="left:674px;top:61px" viewBox="0 0 24 24"><path d="M9.500 3.500H5.500a3 3 0 0 0-3 3V18.500a3 3 0 0 0 3 3H17a3 3 0 0 0 3-3V16.500" fill="none" stroke="#8a8a8a" stroke-width="2.300" stroke-linecap="round"/><path d="M12 1.500 18.500 7.500 12 13.500V10c-3.500 0-5 1.500-6 5 0-6 2-9.500 6-10z" fill="#c4c4c4" stroke="#9a9a9a" stroke-width=".9" stroke-linejoin="round"/><path d="M17.500 1.800 23.300 7.500 17.500 13.200" fill="none" stroke="#a8a8a8" stroke-width="1.800"/></svg>
<div class="dd g" style="left:703.5px;top:71px"></div>
<div class="tbend" style="left:715px;top:57px;height:32px"></div>
<svg class="handle" style="left:720px;top:59px" viewBox="0 0 3 27" ><rect x="0" y="0" width="2" height="2" fill="#fbfbfb"/><rect x="1" y="1" width="1.600" height="1.600" fill="#adadad"/><rect x="0" y="4" width="2" height="2" fill="#fbfbfb"/><rect x="1" y="5" width="1.600" height="1.600" fill="#adadad"/><rect x="0" y="8" width="2" height="2" fill="#fbfbfb"/><rect x="1" y="9" width="1.600" height="1.600" fill="#adadad"/><rect x="0" y="12" width="2" height="2" fill="#fbfbfb"/><rect x="1" y="13" width="1.600" height="1.600" fill="#adadad"/><rect x="0" y="16" width="2" height="2" fill="#fbfbfb"/><rect x="1" y="17" width="1.600" height="1.600" fill="#adadad"/><rect x="0" y="20" width="2" height="2" fill="#fbfbfb"/><rect x="1" y="21" width="1.600" height="1.600" fill="#adadad"/><rect x="0" y="24" width="2" height="2" fill="#fbfbfb"/><rect x="1" y="25" width="1.600" height="1.600" fill="#adadad"/></svg>
<svg class="ico" style="left:729px;top:61px" viewBox="0 0 24 24"><path d="M1.500 1 3 18.500 7.500 14.500 10.500 22 14 20.500 11 13.500 17 13z" fill="#5f635f" stroke="#2e302e" stroke-width=".9" stroke-linejoin="round"/><path d="M13.500 6.500c0-3 2-4.800 4.800-4.800 2.700 0 4.700 1.700 4.700 4.200 0 3.300-4.200 3.600-4.200 7.300" fill="none" stroke="#1d4e9a" stroke-width="3"/><path d="M13.500 6.500c0-3 2-4.800 4.800-4.800 2.700 0 4.700 1.700 4.700 4.200 0 3.300-4.200 3.600-4.200 7.300" fill="none" stroke="#4c86d6" stroke-width="1.700"/><circle cx="18.800" cy="17.300" r="1.700" fill="#4c86d6" stroke="#1d4e9a" stroke-width=".7"/></svg>
<div class="tbend" style="left:758px;top:57px;height:32px"></div>
<svg class="handle" style="left:763px;top:59px" viewBox="0 0 3 27" ><rect x="0" y="0" width="2" height="2" fill="#fbfbfb"/><rect x="1" y="1" width="1.600" height="1.600" fill="#adadad"/><rect x="0" y="4" width="2" height="2" fill="#fbfbfb"/><rect x="1" y="5" width="1.600" height="1.600" fill="#adadad"/><rect x="0" y="8" width="2" height="2" fill="#fbfbfb"/><rect x="1" y="9" width="1.600" height="1.600" fill="#adadad"/><rect x="0" y="12" width="2" height="2" fill="#fbfbfb"/><rect x="1" y="13" width="1.600" height="1.600" fill="#adadad"/><rect x="0" y="16" width="2" height="2" fill="#fbfbfb"/><rect x="1" y="17" width="1.600" height="1.600" fill="#adadad"/><rect x="0" y="20" width="2" height="2" fill="#fbfbfb"/><rect x="1" y="21" width="1.600" height="1.600" fill="#adadad"/><rect x="0" y="24" width="2" height="2" fill="#fbfbfb"/><rect x="1" y="25" width="1.600" height="1.600" fill="#adadad"/></svg>
<svg class="ico" style="left:772px;top:61px" viewBox="0 0 24 24"><text x="12" y="22.300" text-anchor="middle" font-family="Liberation Serif,serif" font-size="31" fill="#dcdcdc" stroke="#8f8f8f" stroke-width=".9">A</text></svg>
<div class="vsep" style="left:802px;top:61px;height:24px"></div>
<svg class="ico" style="left:809px;top:61px" viewBox="0 0 24 24"><circle cx="12" cy="12" r="10.800" fill="url(#gSph)" stroke="#979797" stroke-width="1"/></svg>
<svg class="ico" style="left:840px;top:61px" viewBox="0 0 24 24"><ellipse cx="12" cy="19" rx="11" ry="3.600" fill="#a9a9a9" stroke="#909090" stroke-width=".8"/><path d="M12 1.500c2 3.200 3.300 5 3.300 6.800a3.300 3.300 0 0 1-6.600 0c0-1.800 1.300-3.600 3.300-6.800z" fill="#9d9d9d" stroke="#8a8a8a" stroke-width=".7"/></svg>
<svg class="ico" style="left:871px;top:61px" viewBox="0 0 24 24"><circle cx="13" cy="11.500" r="10" fill="url(#gSph)" stroke="#8f8f8f" stroke-width="1"/><path d="M2 1v21.500h21" fill="none" stroke="#8b8b8b" stroke-width="2"/><path d="M3 18c3-1 3.500-7 6-7.500s3 .5 5-1 2.500-5 6-6.500" fill="none" stroke="#8b8b8b" stroke-width="1.700"/></svg>
<svg class="ico" style="left:902px;top:61px" viewBox="0 0 24 24"><path d="M7.600 1.800A10.900 10.900 0 1 0 22 15.800z" fill="url(#gSph)" stroke="#8f8f8f" stroke-width="1"/><ellipse cx="14.800" cy="8.800" rx="10" ry="2.300" transform="rotate(44 14.800 8.800)" fill="#e9e9e9" stroke="#8f8f8f" stroke-width=".9"/><path d="M12.600 7.200 17.800 3M16.300 11.200 21.800 6.800" stroke="#858585" stroke-width="2.500" stroke-linecap="round"/><path d="M13.600 6.400 14.600 7.600M15.300 5 16.300 6.200M17.500 10.200 18.500 11.400M19.300 8.800 20.300 10" stroke="#cfcfcf" stroke-width=".7"/></svg>
<svg class="ico" style="left:933px;top:61px" viewBox="0 0 24 24"><circle cx="15.500" cy="6.500" r="5.300" fill="url(#gSph)" stroke="#979797" stroke-width=".9"/><circle cx="6.500" cy="13.500" r="5.300" fill="url(#gSph)" stroke="#979797" stroke-width=".9"/><circle cx="17.500" cy="17.500" r="5.300" fill="url(#gSph)" stroke="#979797" stroke-width=".9"/></svg>
<div class="vsep" style="left:963px;top:61px;height:24px"></div>
<svg class="ico" style="left:970px;top:61px" viewBox="0 0 24 24"><path d="M1.500 6.500 11 2 22.500 4.500V17.500L13 22.500 1.500 19.500z" fill="#9a9a9a" stroke="#7d7d7d" stroke-width=".9" stroke-linejoin="round"/><path d="M1.500 6.500 11 2 22.500 4.500 13 9.500z" fill="#cfcfcf" stroke="#7d7d7d" stroke-width=".8"/><path d="M13 9.500 22.500 4.500V17.500L13 22.500z" fill="#b4b4b4" stroke="#7d7d7d" stroke-width=".8"/><path d="M5.300 4.700 16.800 7.500V20.500M8.200 3.300 19.700 6V19" fill="none" stroke="#7d7d7d" stroke-width="1.300"/></svg>
<svg class="ico" style="left:1001px;top:61px" viewBox="0 0 24 24"><path d="M2.500 6.500C5 2 12 .5 16.500 3.500L18.500 1.500V8.500L22.500 9 20 19.500 10.500 22.500 1.500 17z" fill="#979797" stroke="#838383" stroke-width=".7" stroke-linejoin="round"/><path d="M3.500 6.500C6.500 3 12 2 16 4.500" fill="none" stroke="#bdbdbd" stroke-width="1.400"/><path d="M6.500 7.500 12.500 10.500" stroke="#f1f1f1" stroke-width="1.700" stroke-linecap="round"/><path d="M13.500 13 12 21.500M16.500 11.500 15 20.500M19.500 10 18 19.500" stroke="#e1e1e1" stroke-width="1.500"/></svg>
<svg class="ico" style="left:1032px;top:61px" viewBox="0 0 24 24"><path d="M1 9 8 6.500 23 8.500V13L15.500 16.500 1 13.500z" fill="#8d8d8d" stroke="#777" stroke-width=".8" stroke-linejoin="round"/><path d="M1 9 15.500 11.500 23 8.500M15.500 11.500V16.500M5 9.700V14.300M9 10.400V15.100M12.500 11V15.800M4.500 7.800 19 10M18 10.500V15.300M20.500 9.500V14.200" fill="none" stroke="#b9b9b9" stroke-width=".6"/></svg>
<svg class="ico" style="left:1063px;top:61px" viewBox="0 0 24 24"><g transform="translate(11,8.5) rotate(-38)"><rect x="-7" y="-4.25" width="14" height="8.5" rx="2.55" ry="4.25" fill="#cfcfcf" stroke="#8a8a8a" stroke-width=".9"/><ellipse cx="-2.94" cy="0" rx="2.55" ry="4.25" fill="none" stroke="#8a8a8a" stroke-width=".65"/><ellipse cx="0.84" cy="0" rx="2.55" ry="4.25" fill="none" stroke="#8a8a8a" stroke-width=".65"/><ellipse cx="4.45" cy="0" rx="2.55" ry="4.25" fill="none" stroke="#8a8a8a" stroke-width=".65"/><path d="M-6 -2.3375 H6 M-7 0 H7 M-6 2.3375 H6" stroke="#8a8a8a" stroke-width=".6"/></g><path d="M15.500 .8H23L20 8.500z" fill="#858585"/><path d="M1.500 13.500 7.500 9.500 9.500 14.500 6.500 14 4.500 17z" fill="#858585"/><text x="15.800" y="23.300" text-anchor="middle" font-family="Liberation Serif,serif" font-weight="bold" font-size="13.500" fill="#8c8c8c">1D</text></svg>
<div class="tbend" style="left:1092px;top:57px;height:32px"></div>
<svg class="handle" style="left:1097px;top:59px" viewBox="0 0 3 27" ><rect x="0" y="0" width="2" height="2" fill="#fbfbfb"/><rect x="1" y="1" width="1.600" height="1.600" fill="#adadad"/><rect x="0" y="4" width="2" height="2" fill="#fbfbfb"/><rect x="1" y="5" width="1.600" height="1.600" fill="#adadad"/><rect x="0" y="8" width="2" height="2" fill="#fbfbfb"/><rect x="1" y="9" width="1.600" height="1.600" fill="#adadad"/><rect x="0" y="12" width="2" height="2" fill="#fbfbfb"/><rect x="1" y="13" width="1.600" height="1.600" fill="#adadad"/><rect x="0" y="16" width="2" height="2" fill="#fbfbfb"/><rect x="1" y="17" width="1.600" height="1.600" fill="#adadad"/><rect x="0" y="20" width="2" height="2" fill="#fbfbfb"/><rect x="1" y="21" width="1.600" height="1.600" fill="#adadad"/><rect x="0" y="24" width="2" height="2" fill="#fbfbfb"/><rect x="1" y="25" width="1.600" height="1.600" fill="#adadad"/></svg>
<svg class="ico" style="left:1106px;top:61px" viewBox="0 0 24 24"><path d="M4 8.200C6.500 -.5 17.500 -.5 20 8.200M4 15.800C6.500 24.500 17.500 24.500 20 15.800M10.300 9c1-1.400 2.400-1.400 3.400 0M10.300 15c1 1.400 2.400 1.400 3.400 0" fill="none" stroke="#848484" stroke-width="1.900"/><path d="M4 8.200C6.500 -.5 17.500 -.5 20 8.200M4 15.800C6.500 24.500 17.500 24.500 20 15.800" fill="none" stroke="#b9b9b9" stroke-width=".6"/><circle cx="6.700" cy="12" r="4.700" fill="#a6a6a6" stroke="#7f7f7f" stroke-width="1.300"/><circle cx="17.300" cy="12" r="4.700" fill="#a6a6a6" stroke="#7f7f7f" stroke-width="1.300"/><path d="M3.500 12h6.400M6.700 8.800v6.400M14.100 12h6.400" stroke="#f4f4f4" stroke-width="2"/></svg>
<div class="dd g" style="left:1136px;top:71px"></div>
<div class="tbend" style="left:1146px;top:57px;height:32px"></div>
<svg class="handle" style="left:1152px;top:59px" viewBox="0 0 3 27" ><rect x="0" y="0" width="2" height="2" fill="#fbfbfb"/><rect x="1" y="1" width="1.600" height="1.600" fill="#adadad"/><rect x="0" y="4" width="2" height="2" fill="#fbfbfb"/><rect x="1" y="5" width="1.600" height="1.600" fill="#adadad"/><rect x="0" y="8" width="2" height="2" fill="#fbfbfb"/><rect x="1" y="9" width="1.600" height="1.600" fill="#adadad"/><rect x="0" y="12" width="2" height="2" fill="#fbfbfb"/><rect x="1" y="13" width="1.600" height="1.600" fill="#adadad"/><rect x="0" y="16" width="2" height="2" fill="#fbfbfb"/><rect x="1" y="17" width="1.600" height="1.600" fill="#adadad"/><rect x="0" y="20" width="2" height="2" fill="#fbfbfb"/><rect x="1" y="21" width="1.600" height="1.600" fill="#adadad"/><rect x="0" y="24" width="2" height="2" fill="#fbfbfb"/><rect x="1" y="25" width="1.600" height="1.600" fill="#adadad"/></svg>
<svg class="ico" style="left:1160.6px;top:61px" viewBox="0 0 24 24"><path d="M1.5 4.5 q3.75 -4.5 7.5 0 t7.5 0 M1.5 9.7 q3.75 -4.5 7.5 0 t7.5 0 M1.5 14.9 q3.75 -4.5 7.5 0 t7.5 0 " fill="none" stroke="#858585" stroke-width="2.5" stroke-linecap="round"/><path d="M17.500 14.500h3v6.500h1.800v1.800h-5.600v-1.800h1.600v-4.500h-1.100z" fill="#878787"/><circle cx="19.500" cy="11.800" r="1.500" fill="#878787"/></svg>
<svg class="ico" style="left:1193px;top:61px" viewBox="0 0 24 24"><path d="M3.25 4 v12 a5.25 2.94 0 0 0 10.5 0 v-12" fill="#c9c9c9" stroke="#8a8a8a" stroke-width=".9"/><ellipse cx="8.5" cy="4" rx="5.25" ry="2.94" fill="#e6e6e6" stroke="#8a8a8a" stroke-width=".9"/><path d="M3.25 8.2 a5.25 2.94 0 0 0 10.5 0 M3.25 12.4 a5.25 2.94 0 0 0 10.5 0 M8.5 6.94 v12 M5.56 6.352 v12 M11.44 6.352 v12" fill="none" stroke="#8a8a8a" stroke-width=".7"/><path d="M17.500 14.500h3v6.500h1.800v1.800h-5.600v-1.800h1.600v-4.500h-1.100z" fill="#878787"/><circle cx="19.500" cy="11.800" r="1.500" fill="#878787"/></svg>
<div class="vsep" style="left:1222px;top:61px;height:24px"></div>
<svg class="ico" style="left:1229px;top:61px" viewBox="0 0 24 24"><path d="M1.5 5 q5.25 -5.5 10.5 0 t10.5 0 M1.5 11.7 q5.25 -5.5 10.5 0 t10.5 0 M1.5 18.4 q5.25 -5.5 10.5 0 t10.5 0 " fill="none" stroke="#7f7f7f" stroke-width="3.4" stroke-linecap="round"/><path d="M1.5 5 q5.25 -5.5 10.5 0 t10.5 0 M1.5 11.7 q5.25 -5.5 10.5 0 t10.5 0 M1.5 18.4 q5.25 -5.5 10.5 0 t10.5 0 " fill="none" stroke="#a9a9a9" stroke-width="1.5" stroke-linecap="round"/></svg>
<div class="tbend" style="left:1258px;top:57px;height:32px"></div>
<svg class="handle" style="left:1263px;top:59px" viewBox="0 0 3 27" ><rect x="0" y="0" width="2" height="2" fill="#fbfbfb"/><rect x="1" y="1" width="1.600" height="1.600" fill="#adadad"/><rect x="0" y="4" width="2" height="2" fill="#fbfbfb"/><rect x="1" y="5" width="1.600" height="1.600" fill="#adadad"/><rect x="0" y="8" width="2" height="2" fill="#fbfbfb"/><rect x="1" y="9" width="1.600" height="1.600" fill="#adadad"/><rect x="0" y="12" width="2" height="2" fill="#fbfbfb"/><rect x="1" y="13" width="1.600" height="1.600" fill="#adadad"/><rect x="0" y="16" width="2" height="2" fill="#fbfbfb"/><rect x="1" y="17" width="1.600" height="1.600" fill="#adadad"/><rect x="0" y="20" width="2" height="2" fill="#fbfbfb"/><rect x="1" y="21" width="1.600" height="1.600" fill="#adadad"/><rect x="0" y="24" width="2" height="2" fill="#fbfbfb"/><rect x="1" y="25" width="1.600" height="1.600" fill="#adadad"/></svg>
<svg class="ico" style="left:1272px;top:61px" viewBox="0 0 24 24"><g transform="translate(15.5,7) rotate(-30)"><rect x="-7" y="-4.25" width="14" height="8.5" rx="2.55" ry="4.25" fill="#dddddd" stroke="#8c8c8c" stroke-width=".9"/><ellipse cx="-2.94" cy="0" rx="2.55" ry="4.25" fill="none" stroke="#8c8c8c" stroke-width=".65"/><ellipse cx="0.84" cy="0" rx="2.55" ry="4.25" fill="none" stroke="#8c8c8c" stroke-width=".65"/><ellipse cx="4.45" cy="0" rx="2.55" ry="4.25" fill="none" stroke="#8c8c8c" stroke-width=".65"/><path d="M-6 -2.3375 H6 M-7 0 H7 M-6 2.3375 H6" stroke="#8c8c8c" stroke-width=".6"/></g><path d="M2 14.500 9.500 13l1.500 8-7.500 1.800z" fill="#d8d8d8" stroke="#7c7c7c" stroke-width=".9" stroke-linejoin="round"/><circle cx="6.500" cy="17.800" r="2" fill="#9a9a9a" stroke="#6f6f6f" stroke-width=".7"/><path d="M3.700 15.500l1 .9M9 14.600l-.8 1M4.200 20.500l.9-.9M9.600 19.800l-1-.8" stroke="#6f6f6f" stroke-width=".9"/></svg>
<svg class="ico" style="left:1303px;top:61px" viewBox="0 0 24 24"><path d="M1.500 7 11.500 2 22.500 4.500V17L13 22.500 1.500 19.500z" fill="#cdcdcd" stroke="#8c8c8c" stroke-width=".9" stroke-linejoin="round"/><path d="M1.500 7 11.500 2 22.500 4.500 13 9.500z" fill="#e4e4e4" stroke="#8c8c8c" stroke-width=".8"/><path d="M13 9.500 22.500 4.500V17L13 22.500z" fill="#b2b2b2" stroke="#8c8c8c" stroke-width=".8"/><path d="M6.500 4.500 18 7V20M9 3.200 20.500 5.800" fill="none" stroke="#8c8c8c" stroke-width="1"/></svg>
<svg class="ico" style="left:1334px;top:61px" viewBox="0 0 24 24"><path d="M1 2.500h11M5 2.500V14M8 2.500V14" fill="none" stroke="#848484" stroke-width="1.700"/><path d="M9.500 3V15.500H23" fill="none" stroke="#848484" stroke-width="1.400"/><path d="M4 23 16.500 8.500" stroke="#8f8f8f" stroke-width="1.600"/><path d="M15 5l1.500-2M12 19l2 2M17.500 19.500l2.500 1.500M5 17.500l2 1" stroke="#909090" stroke-width="1.800" stroke-linecap="round"/></svg>
<div class="tbend" style="left:1363px;top:57px;height:32px"></div>
<svg class="handle" style="left:1369px;top:59px" viewBox="0 0 3 27" ><rect x="0" y="0" width="2" height="2" fill="#fbfbfb"/><rect x="1" y="1" width="1.600" height="1.600" fill="#adadad"/><rect x="0" y="4" width="2" height="2" fill="#fbfbfb"/><rect x="1" y="5" width="1.600" height="1.600" fill="#adadad"/><rect x="0" y="8" width="2" height="2" fill="#fbfbfb"/><rect x="1" y="9" width="1.600" height="1.600" fill="#adadad"/><rect x="0" y="12" width="2" height="2" fill="#fbfbfb"/><rect x="1" y="13" width="1.600" height="1.600" fill="#adadad"/><rect x="0" y="16" width="2" height="2" fill="#fbfbfb"/><rect x="1" y="17" width="1.600" height="1.600" fill="#adadad"/><rect x="0" y="20" width="2" height="2" fill="#fbfbfb"/><rect x="1" y="21" width="1.600" height="1.600" fill="#adadad"/><rect x="0" y="24" width="2" height="2" fill="#fbfbfb"/><rect x="1" y="25" width="1.600" height="1.600" fill="#adadad"/></svg>
<svg class="ico" style="left:1376.6px;top:61px" viewBox="0 0 24 24"><text transform="translate(.3,20.500) scale(.62,1)" font-family="Liberation Sans,sans-serif" font-size="21" fill="#888" stroke="#888" stroke-width=".5">S<tspan font-size="11.500" stroke-width=".35">olver</tspan></text></svg>
<div class="vsep" style="left:1407px;top:61px;height:24px"></div>
<svg class="ico" style="left:1414px;top:61px" viewBox="0 0 24 24"><path d="M1 6.500c8-1 15 0 22 3.500V18.500C16 15.500 9 14.500 1 15.500z" fill="#8d8d8d"/></svg>
<div class="dd g" style="left:1444px;top:71px"></div>
<svg class="ico" style="left:1457px;top:61px" viewBox="0 0 24 24"><ellipse cx="12" cy="6" rx="9" ry="4.500" fill="none" stroke="#b4b4b4" stroke-width=".7"/><ellipse cx="12" cy="18" rx="9" ry="4.500" fill="none" stroke="#b4b4b4" stroke-width=".7"/><path d="M1.500 3 12.500 6V21L1.500 18z" fill="#7d7d7d" stroke="#6a6a6a" stroke-width=".7"/><path d="M2 7 12.500 10M2 10.500 12.500 13.500M2 14 12.500 17" stroke="#9c9c9c" stroke-width=".6"/><path d="M13 8 22.500 3.500V15.500L13 21z" fill="#b9b9b9" stroke="#8b8b8b" stroke-width=".8"/></svg>
<div class="dd g" style="left:1487px;top:71px"></div>
<svg class="ico" style="left:1499.7px;top:61px" viewBox="0 0 24 24"><path d="M5 7h17M5 12h17M5 17h17" stroke="#8a8a8a" stroke-width="2" stroke-linecap="round"/><path d="M1.500 3l4 4-3 2M1.500 21l4-4-3-2M1.500 9.500 5.500 12 1.500 14.500" fill="none" stroke="#8a8a8a" stroke-width="1.600" stroke-linejoin="round"/></svg>
<svg class="ico" style="left:1531px;top:61px" viewBox="0 0 24 24"><path d="M2 5.500c0-5 9-5 10 0 1-5 10-5 10 0V19c0 4-9 4-10 0-1 4-10 4-10 0z" fill="#ededed" stroke="#b4b4b4" stroke-width=".8" stroke-dasharray="2 1.200"/><path d="M12 5.500V19" stroke="#b4b4b4" stroke-width=".8"/><path d="M5 10 19 8M5 14 19 12M5 18 19 16" stroke="#c2c2c2" stroke-width=".8"/><path d="M12.500 3v18" stroke="#a4a4a4" stroke-width=".6"/></svg>
<svg class="ico" style="left:1562px;top:61px" viewBox="0 0 24 24"><path d="M12 3.500V16" stroke="#6f6f6f" stroke-width="4.400" stroke-linecap="round"/><circle cx="12" cy="18.200" r="4.500" fill="#6f6f6f"/><path d="M12 4V15" stroke="#cfcfcf" stroke-width="1.300" stroke-linecap="round"/><circle cx="12" cy="18.200" r="2.600" fill="#8d8d8d"/></svg>
<div class="vsep" style="left:1592px;top:61px;height:24px"></div>
<svg class="ico" style="left:1598px;top:61px" viewBox="0 0 24 24"><path d="M6.500 3.500h9.500l1 1.500V21H6.500z" fill="url(#gGr)" stroke="#8f8f8f" stroke-width=".8"/><path d="M3 3.500l3 .8M4.500 8l2.500 1M15.500 6.500l2 2.200M16 13.500l1.500 2M6 21.500l1.500.8M14 21.500l1.500.5" stroke="#858585" stroke-width="1.700" stroke-linecap="round"/><circle cx="19.500" cy="3.500" r="2" fill="#fbfbfb"/></svg>
<svg class="ico" style="left:1630px;top:61px" viewBox="0 0 24 24"><path d="M6.500 3.500h9.500l1 1.500V21H6.500z" fill="url(#gGr)" stroke="#8f8f8f" stroke-width=".8"/><circle cx="12.500" cy="13" r="2.700" fill="#8d8d8d"/><path d="M13.500 12.500 17 8" stroke="#8d8d8d" stroke-width="1.800" stroke-linecap="round"/><path d="M2.500 3.500l3 .8M1.500 12.500l2.500 .6M3 18l2-1.200M4 21.500l2-1M19 6l2.500-1.200M19.500 11l3 .5M19.500 15l2.500 1M8.500 2.500l2 .5M13.500 2.500l1.500.8M6 21.500l1.500.8M14 21.500l1.500.5" stroke="#858585" stroke-width="1.600" stroke-linecap="round"/><circle cx="20" cy="3" r="1.800" fill="#fbfbfb"/></svg>
<svg class="ico" style="left:6.7px;top:95px" viewBox="0 0 24 24"><g transform="translate(16,7.5) rotate(-32)"><rect x="-7.75" y="-4.75" width="15.5" height="9.5" rx="2.85" ry="4.75" fill="#dddddd" stroke="#8c8c8c" stroke-width=".9"/><ellipse cx="-3.255" cy="0" rx="2.85" ry="4.75" fill="none" stroke="#8c8c8c" stroke-width=".65"/><ellipse cx="0.93" cy="0" rx="2.85" ry="4.75" fill="none" stroke="#8c8c8c" stroke-width=".65"/><ellipse cx="4.9" cy="0" rx="2.85" ry="4.75" fill="none" stroke="#8c8c8c" stroke-width=".65"/><path d="M-6.75 -2.6125 H6.75 M-7.75 0 H7.75 M-6.75 2.6125 H6.75" stroke="#8c8c8c" stroke-width=".6"/></g><path d="M3 15.500v-2.500a3.300 3.300 0 0 1 6.600 0v2.500" fill="none" stroke="#9a9a9a" stroke-width="2.200"/><rect x="1.500" y="15" width="9.600" height="8" fill="#8b8b8b" stroke="#747474" stroke-width=".8"/><path d="M3 17.500h6.600M3 19.500h6.600M3 21.300h6.600" stroke="#777" stroke-width=".7"/></svg>
<svg class="ico" style="left:38px;top:95px" viewBox="0 0 24 24"><g transform="translate(16,7.5) rotate(-32)"><rect x="-7.75" y="-4.75" width="15.5" height="9.5" rx="2.85" ry="4.75" fill="#dddddd" stroke="#8c8c8c" stroke-width=".9"/><ellipse cx="-3.255" cy="0" rx="2.85" ry="4.75" fill="none" stroke="#8c8c8c" stroke-width=".65"/><ellipse cx="0.93" cy="0" rx="2.85" ry="4.75" fill="none" stroke="#8c8c8c" stroke-width=".65"/><ellipse cx="4.9" cy="0" rx="2.85" ry="4.75" fill="none" stroke="#8c8c8c" stroke-width=".65"/><path d="M-6.75 -2.6125 H6.75 M-7.75 0 H7.75 M-6.75 2.6125 H6.75" stroke="#8c8c8c" stroke-width=".6"/></g><path d="M5.300 13.500V19.500L1.500 22.700M5.300 19.500 9.300 22.700" fill="none" stroke="#9c9c9c" stroke-width="2" stroke-linecap="round"/><path d="M5.300 14V19.500L2 22.300M5.300 19.500 9 22.300" fill="none" stroke="#e4e4e4" stroke-width=".7" stroke-linecap="round"/><text x="19" y="23" text-anchor="middle" font-family="Liberation Sans,sans-serif" font-size="12.500" fill="#8d8d8d" stroke="#8d8d8d" stroke-width=".4">D</text></svg>
<svg class="ico" style="left:69px;top:95px" viewBox="0 0 24 24"><g transform="translate(8,11.5) rotate(-32)"><rect x="-6.5" y="-4.5" width="13" height="9" rx="2.7" ry="4.5" fill="#dddddd" stroke="#8c8c8c" stroke-width=".9"/><ellipse cx="-2.73" cy="0" rx="2.7" ry="4.5" fill="none" stroke="#8c8c8c" stroke-width=".65"/><ellipse cx="0.78" cy="0" rx="2.7" ry="4.5" fill="none" stroke="#8c8c8c" stroke-width=".65"/><ellipse cx="3.8" cy="0" rx="2.7" ry="4.5" fill="none" stroke="#8c8c8c" stroke-width=".65"/><path d="M-5.5 -2.475 H5.5 M-6.5 0 H6.5 M-5.5 2.475 H5.5" stroke="#8c8c8c" stroke-width=".6"/></g><g transform="translate(16.5,12.5) rotate(-32)"><rect x="-6.5" y="-4.5" width="13" height="9" rx="2.7" ry="4.5" fill="#dddddd" stroke="#8c8c8c" stroke-width=".9"/><ellipse cx="-2.73" cy="0" rx="2.7" ry="4.5" fill="none" stroke="#8c8c8c" stroke-width=".65"/><ellipse cx="0.78" cy="0" rx="2.7" ry="4.5" fill="none" stroke="#8c8c8c" stroke-width=".65"/><ellipse cx="3.8" cy="0" rx="2.7" ry="4.5" fill="none" stroke="#8c8c8c" stroke-width=".65"/><path d="M-5.5 -2.475 H5.5 M-6.5 0 H6.5 M-5.5 2.475 H5.5" stroke="#8c8c8c" stroke-width=".6"/></g></svg>
<svg class="ico" style="left:100px;top:95px" viewBox="0 0 24 24"><g transform="translate(8,11) rotate(-32)"><rect x="-6.5" y="-4.5" width="13" height="9" rx="2.7" ry="4.5" fill="#dddddd" stroke="#8c8c8c" stroke-width=".9"/><ellipse cx="-2.73" cy="0" rx="2.7" ry="4.5" fill="none" stroke="#8c8c8c" stroke-width=".65"/><ellipse cx="0.78" cy="0" rx="2.7" ry="4.5" fill="none" stroke="#8c8c8c" stroke-width=".65"/><ellipse cx="3.8" cy="0" rx="2.7" ry="4.5" fill="none" stroke="#8c8c8c" stroke-width=".65"/><path d="M-5.5 -2.475 H5.5 M-6.5 0 H6.5 M-5.5 2.475 H5.5" stroke="#8c8c8c" stroke-width=".6"/></g><g transform="translate(16,13) rotate(-32)"><rect x="-6.5" y="-4.5" width="13" height="9" rx="2.7" ry="4.5" fill="#dddddd" stroke="#8c8c8c" stroke-width=".9"/><ellipse cx="-2.73" cy="0" rx="2.7" ry="4.5" fill="none" stroke="#8c8c8c" stroke-width=".65"/><ellipse cx="0.78" cy="0" rx="2.7" ry="4.5" fill="none" stroke="#8c8c8c" stroke-width=".65"/><ellipse cx="3.8" cy="0" rx="2.7" ry="4.5" fill="none" stroke="#8c8c8c" stroke-width=".65"/><path d="M-5.5 -2.475 H5.5 M-6.5 0 H6.5 M-5.5 2.475 H5.5" stroke="#8c8c8c" stroke-width=".6"/></g></svg>
<svg class="ico" style="left:131px;top:95px" viewBox="0 0 24 24"><path d="M3.500 2h17L4 7.500 20.500 10.500 4 14 20.500 17.500 4 22h16.500" fill="none" stroke="#8e8e8e" stroke-width="3.200" stroke-linejoin="round"/><path d="M3.500 2h17L4 7.500 20.500 10.500 4 14 20.500 17.500 4 22h16.500" fill="none" stroke="#d6d6d6" stroke-width="1.400" stroke-linejoin="round"/></svg>
<div class="vsep" style="left:161px;top:95px;height:24px"></div>
<svg class="ico" style="left:168.4px;top:95px" viewBox="0 0 24 24"><g transform="translate(16.5,7) rotate(-32)"><rect x="-7.25" y="-4.5" width="14.5" height="9" rx="2.7" ry="4.5" fill="#dddddd" stroke="#8c8c8c" stroke-width=".9"/><ellipse cx="-3.045" cy="0" rx="2.7" ry="4.5" fill="none" stroke="#8c8c8c" stroke-width=".65"/><ellipse cx="0.87" cy="0" rx="2.7" ry="4.5" fill="none" stroke="#8c8c8c" stroke-width=".65"/><ellipse cx="4.55" cy="0" rx="2.7" ry="4.5" fill="none" stroke="#8c8c8c" stroke-width=".65"/><path d="M-6.25 -2.475 H6.25 M-7.25 0 H7.25 M-6.25 2.475 H6.25" stroke="#8c8c8c" stroke-width=".6"/></g><path d="M12.500 10.500 11 19 8.500 16.500 3 22.500 1 20.500 7 15 4.500 12.500z" fill="#868686" stroke="#757575" stroke-width=".6" stroke-linejoin="round"/></svg>
<svg class="ico" style="left:199px;top:95px" viewBox="0 0 24 24"><path d="M4 2.5h2.400v3.500h1.800l-3 3.500-3-3.500h1.800z" fill="#909090" stroke="#7d7d7d" stroke-width=".5"/><path d="M10.8 0.5h2.400v3.500h1.800l-3 3.500-3-3.500h1.800z" fill="#909090" stroke="#7d7d7d" stroke-width=".5"/><path d="M17.6 2.5h2.400v3.500h1.800l-3 3.500-3-3.500h1.800z" fill="#909090" stroke="#7d7d7d" stroke-width=".5"/><path d="M7.25 11.05 v10.5 a4.75 2.66 0 0 0 9.5 0 v-10.5" fill="#dcdcdc" stroke="#8c8c8c" stroke-width=".9"/><ellipse cx="12" cy="11.05" rx="4.75" ry="2.66" fill="#e6e6e6" stroke="#8c8c8c" stroke-width=".9"/><path d="M7.25 14.725 a4.75 2.66 0 0 0 9.5 0 M7.25 18.4 a4.75 2.66 0 0 0 9.5 0 M12 13.71 v10.5 M9.34 13.178 v10.5 M14.66 13.178 v10.5" fill="none" stroke="#8c8c8c" stroke-width=".7"/></svg>
<svg class="ico" style="left:229px;top:95px" viewBox="0 0 24 24"><path d="M16 3.500A9.300 9.300 0 1 0 17.500 20.500" fill="none" stroke="#8b8b8b" stroke-width="2.600"/><path d="M12.500 .5 19.500 3 14 7.500z" fill="#8b8b8b"/><g transform="translate(14.5,12.5) rotate(-25)"><rect x="-6" y="-4.5" width="12" height="9" rx="2.7" ry="4.5" fill="#dddddd" stroke="#8c8c8c" stroke-width=".9"/><ellipse cx="-2.52" cy="0" rx="2.7" ry="4.5" fill="none" stroke="#8c8c8c" stroke-width=".65"/><ellipse cx="0.72" cy="0" rx="2.7" ry="4.5" fill="none" stroke="#8c8c8c" stroke-width=".65"/><ellipse cx="3.3" cy="0" rx="2.7" ry="4.5" fill="none" stroke="#8c8c8c" stroke-width=".65"/><path d="M-5 -2.475 H5 M-6 0 H6 M-5 2.475 H5" stroke="#8c8c8c" stroke-width=".6"/></g></svg>
<svg class="ico" style="left:261px;top:95px" viewBox="0 0 24 24"><path d="M7.5 2 v9 a4.5 2.52 0 0 0 9 0 v-9" fill="#dcdcdc" stroke="#8c8c8c" stroke-width=".9"/><ellipse cx="12" cy="2" rx="4.5" ry="2.52" fill="#e6e6e6" stroke="#8c8c8c" stroke-width=".9"/><path d="M7.5 5.15 a4.5 2.52 0 0 0 9 0 M7.5 8.3 a4.5 2.52 0 0 0 9 0 M12 4.52 v9 M9.48 4.016 v9 M14.52 4.016 v9" fill="none" stroke="#8c8c8c" stroke-width=".7"/><path d="M10.500 13h3v5.500h2.500L12 23.500 8 18.500h2.500z" fill="#a9a9a9" stroke="#8a8a8a" stroke-width=".7" stroke-linejoin="round"/></svg>
<div class="tbend" style="left:290px;top:91px;height:32px"></div>
<svg class="handle" style="left:295px;top:93px" viewBox="0 0 3 27" ><rect x="0" y="0" width="2" height="2" fill="#fbfbfb"/><rect x="1" y="1" width="1.600" height="1.600" fill="#adadad"/><rect x="0" y="4" width="2" height="2" fill="#fbfbfb"/><rect x="1" y="5" width="1.600" height="1.600" fill="#adadad"/><rect x="0" y="8" width="2" height="2" fill="#fbfbfb"/><rect x="1" y="9" width="1.600" height="1.600" fill="#adadad"/><rect x="0" y="12" width="2" height="2" fill="#fbfbfb"/><rect x="1" y="13" width="1.600" height="1.600" fill="#adadad"/><rect x="0" y="16" width="2" height="2" fill="#fbfbfb"/><rect x="1" y="17" width="1.600" height="1.600" fill="#adadad"/><rect x="0" y="20" width="2" height="2" fill="#fbfbfb"/><rect x="1" y="21" width="1.600" height="1.600" fill="#adadad"/><rect x="0" y="24" width="2" height="2" fill="#fbfbfb"/><rect x="1" y="25" width="1.600" height="1.600" fill="#adadad"/></svg>
<svg class="ico" style="left:304px;top:95px" viewBox="0 0 24 24"><g transform="translate(12,11.5) rotate(-32)"><rect x="-9" y="-5.25" width="18" height="10.5" rx="3.15" ry="5.25" fill="#c9c9c9" stroke="#808080" stroke-width=".9"/><ellipse cx="-3.78" cy="0" rx="3.15" ry="5.25" fill="none" stroke="#808080" stroke-width=".65"/><ellipse cx="1.08" cy="0" rx="3.15" ry="5.25" fill="none" stroke="#808080" stroke-width=".65"/><ellipse cx="5.85" cy="0" rx="3.15" ry="5.25" fill="none" stroke="#808080" stroke-width=".65"/><path d="M-8 -2.8875 H8 M-9 0 H9 M-8 2.8875 H8" stroke="#808080" stroke-width=".6"/></g></svg>
<div class="vsep" style="left:334px;top:95px;height:24px"></div>
<svg class="ico" style="left:341px;top:95px" viewBox="0 0 24 24"><g transform="translate(16,7) rotate(-32)"><rect x="-7.25" y="-4.5" width="14.5" height="9" rx="2.7" ry="4.5" fill="#dddddd" stroke="#8c8c8c" stroke-width=".9"/><ellipse cx="-3.045" cy="0" rx="2.7" ry="4.5" fill="none" stroke="#8c8c8c" stroke-width=".65"/><ellipse cx="0.87" cy="0" rx="2.7" ry="4.5" fill="none" stroke="#8c8c8c" stroke-width=".65"/><ellipse cx="4.55" cy="0" rx="2.7" ry="4.5" fill="none" stroke="#8c8c8c" stroke-width=".65"/><path d="M-6.25 -2.475 H6.25 M-7.25 0 H7.25 M-6.25 2.475 H6.25" stroke="#8c8c8c" stroke-width=".6"/></g><path d="M4 10 v10" stroke="#7f7f7f" stroke-width="2.600" stroke-linecap="round"/><circle cx="4" cy="20.6" r="2.400" fill="#7f7f7f"/><path d="M4 10.5 v8" stroke="#c4c4c4" stroke-width=".8"/><path d="M7 16.5 q2.33333 -2.8 4.66667 0 t4.66667 0 t4.66667 0 M7 20.7 q2.33333 -2.8 4.66667 0 t4.66667 0 t4.66667 0 " fill="none" stroke="#8a8a8a" stroke-width="1.5" stroke-linecap="round"/></svg>
<svg class="ico" style="left:372px;top:95px" viewBox="0 0 24 24"><g transform="translate(16,7) rotate(-32)"><rect x="-7.25" y="-4.5" width="14.5" height="9" rx="2.7" ry="4.5" fill="#dddddd" stroke="#8c8c8c" stroke-width=".9"/><ellipse cx="-3.045" cy="0" rx="2.7" ry="4.5" fill="none" stroke="#8c8c8c" stroke-width=".65"/><ellipse cx="0.87" cy="0" rx="2.7" ry="4.5" fill="none" stroke="#8c8c8c" stroke-width=".65"/><ellipse cx="4.55" cy="0" rx="2.7" ry="4.5" fill="none" stroke="#8c8c8c" stroke-width=".65"/><path d="M-6.25 -2.475 H6.25 M-7.25 0 H7.25 M-6.25 2.475 H6.25" stroke="#8c8c8c" stroke-width=".6"/></g><path d="M4 10 v10" stroke="#7f7f7f" stroke-width="2.600" stroke-linecap="round"/><circle cx="4" cy="20.6" r="2.400" fill="#7f7f7f"/><path d="M4 10.5 v8" stroke="#c4c4c4" stroke-width=".8"/></svg>
<svg class="ico" style="left:403px;top:95px" viewBox="0 0 24 24"><g transform="translate(16,7) rotate(-32)"><rect x="-7.25" y="-4.5" width="14.5" height="9" rx="2.7" ry="4.5" fill="#dddddd" stroke="#8c8c8c" stroke-width=".9"/><ellipse cx="-3.045" cy="0" rx="2.7" ry="4.5" fill="none" stroke="#8c8c8c" stroke-width=".65"/><ellipse cx="0.87" cy="0" rx="2.7" ry="4.5" fill="none" stroke="#8c8c8c" stroke-width=".65"/><ellipse cx="4.55" cy="0" rx="2.7" ry="4.5" fill="none" stroke="#8c8c8c" stroke-width=".65"/><path d="M-6.25 -2.475 H6.25 M-7.25 0 H7.25 M-6.25 2.475 H6.25" stroke="#8c8c8c" stroke-width=".6"/></g><path d="M4 10 v10" stroke="#7f7f7f" stroke-width="2.600" stroke-linecap="round"/><circle cx="4" cy="20.6" r="2.400" fill="#7f7f7f"/><path d="M4 10.5 v8" stroke="#c4c4c4" stroke-width=".8"/><path d="M7 16.5 q2.33333 -2.8 4.66667 0 t4.66667 0 t4.66667 0 M7 20.7 q2.33333 -2.8 4.66667 0 t4.66667 0 t4.66667 0 " fill="none" stroke="#8a8a8a" stroke-width="1.5" stroke-linecap="round"/></svg>
<div class="tbend" style="left:432px;top:91px;height:32px"></div>
<svg class="handle" style="left:437px;top:93px" viewBox="0 0 3 27" ><rect x="0" y="0" width="2" height="2" fill="#fbfbfb"/><rect x="1" y="1" width="1.600" height="1.600" fill="#adadad"/><rect x="0" y="4" width="2" height="2" fill="#fbfbfb"/><rect x="1" y="5" width="1.600" height="1.600" fill="#adadad"/><rect x="0" y="8" width="2" height="2" fill="#fbfbfb"/><rect x="1" y="9" width="1.600" height="1.600" fill="#adadad"/><rect x="0" y="12" width="2" height="2" fill="#fbfbfb"/><rect x="1" y="13" width="1.600" height="1.600" fill="#adadad"/><rect x="0" y="16" width="2" height="2" fill="#fbfbfb"/><rect x="1" y="17" width="1.600" height="1.600" fill="#adadad"/><rect x="0" y="20" width="2" height="2" fill="#fbfbfb"/><rect x="1" y="21" width="1.600" height="1.600" fill="#adadad"/><rect x="0" y="24" width="2" height="2" fill="#fbfbfb"/><rect x="1" y="25" width="1.600" height="1.600" fill="#adadad"/></svg>
<svg class="ico" style="left:446px;top:95px" viewBox="0 0 24 24"><path d="M2 7 12 2.500 22 6v11.500L12.500 22.500 2 18.500z" fill="#c6c6c6" stroke="#7c7c7c" stroke-width=".9" stroke-linejoin="round"/><path d="M2 7 12 2.500 22 6 12.500 10.500z" fill="#e4e4e4" stroke="#7c7c7c" stroke-width=".8" stroke-linejoin="round"/><path d="M12.500 10.500 22 6v11.500L12.500 22.500z" fill="#a6a6a6" stroke="#7c7c7c" stroke-width=".8" stroke-linejoin="round"/><path d="M2 10.800 12.500 14.500 22 9.800M2 14.600 12.500 18.500 22 13.700M5.500 8.300V19.800M9 9.400V21.200M15.700 9V21M18.900 7.500V19.200M5.300 5.500 15.800 9M8.700 4 19 7.500" fill="none" stroke="#7c7c7c" stroke-width=".6"/><text x="16" y="14.500" text-anchor="middle" font-family="Liberation Serif,serif" font-weight="bold" font-size="16" fill="#858585" stroke="#5f5f5f" stroke-width=".7">N</text></svg>
<svg class="ico" style="left:477px;top:95px" viewBox="0 0 24 24"><path d="M2 7 12 2.500 22 6v11.500L12.500 22.500 2 18.500z" fill="#c6c6c6" stroke="#7c7c7c" stroke-width=".9" stroke-linejoin="round"/><path d="M2 7 12 2.500 22 6 12.500 10.500z" fill="#e4e4e4" stroke="#7c7c7c" stroke-width=".8" stroke-linejoin="round"/><path d="M12.500 10.500 22 6v11.500L12.500 22.500z" fill="#a6a6a6" stroke="#7c7c7c" stroke-width=".8" stroke-linejoin="round"/><path d="M2 10.800 12.500 14.500 22 9.800M2 14.600 12.500 18.500 22 13.700M5.500 8.300V19.800M9 9.400V21.200M15.700 9V21M18.900 7.500V19.200M5.300 5.500 15.800 9M8.700 4 19 7.500" fill="none" stroke="#7c7c7c" stroke-width=".6"/><text x="16.500" y="14.500" text-anchor="middle" font-family="Liberation Serif,serif" font-weight="bold" font-size="16" fill="#858585" stroke="#5f5f5f" stroke-width=".7">G</text></svg>
<div class="vsep" style="left:507px;top:95px;height:24px"></div>
<svg class="ico" style="left:514px;top:95px" viewBox="0 0 24 24"><path d="M2 7 12 2.500 22 6v11.500L12.500 22.500 2 18.500z" fill="#c2c2c2" stroke="#7c7c7c" stroke-width=".9" stroke-linejoin="round"/><path d="M2 7 12 2.500 22 6 12.500 10.500z" fill="#dadada" stroke="#7c7c7c" stroke-width=".8" stroke-linejoin="round"/><path d="M12.500 10.500 22 6v11.500L12.500 22.500z" fill="#a2a2a2" stroke="#7c7c7c" stroke-width=".8" stroke-linejoin="round"/><path d="M2 10.800 12.500 14.500 22 9.800M2 14.600 12.500 18.500 22 13.700M5.500 8.300V19.800M9 9.400V21.200M15.700 9V21M18.900 7.500V19.200M5.300 5.500 15.800 9M8.700 4 19 7.500" fill="none" stroke="#7c7c7c" stroke-width=".6"/><path d="M10.500 10V22M11.500 10.300V22.300M13.500 10.200V22.200M14.500 9.800V21.800M2 16.500 12.500 20.500 22 15.600M2 17.500 12.500 21.500 22 16.600" stroke="#7c7c7c" stroke-width=".5" fill="none"/><path d="M12.500 22.500 22 17.500 24 18.500 14.500 23.300z" fill="#9a9a9a"/></svg>
<svg class="ico" style="left:545px;top:95px" viewBox="0 0 24 24"><path d="M2 7 12 2.500 22 6v11.500L12.500 22.500 2 18.500z" fill="#c6c6c6" stroke="#7c7c7c" stroke-width=".9" stroke-linejoin="round"/><path d="M2 7 12 2.500 22 6 12.500 10.500z" fill="#e4e4e4" stroke="#7c7c7c" stroke-width=".8" stroke-linejoin="round"/><path d="M12.500 10.500 22 6v11.500L12.500 22.500z" fill="#a6a6a6" stroke="#7c7c7c" stroke-width=".8" stroke-linejoin="round"/><path d="M2 10.800 12.500 14.500 22 9.800M2 14.600 12.500 18.500 22 13.700M5.500 8.300V19.800M9 9.400V21.200M15.700 9V21M18.900 7.500V19.200M5.300 5.500 15.800 9M8.700 4 19 7.500" fill="none" stroke="#7c7c7c" stroke-width=".6"/><path d="M9 9.400 12.500 10.500 15.700 9V17L12.500 18.500 9 17.200z" fill="#777" stroke="#666" stroke-width=".5"/></svg>
<svg class="ico" style="left:576px;top:95px" viewBox="0 0 24 24"><path d="M2 7 12 2.500 22 6v11.500L12.500 22.500 2 18.500z" fill="#dadada" stroke="#9a9a9a" stroke-width=".9" stroke-linejoin="round"/><path d="M2 7 12 2.500 22 6 12.500 10.500z" fill="#ececec" stroke="#9a9a9a" stroke-width=".8" stroke-linejoin="round"/><path d="M12.500 10.500 22 6v11.500L12.500 22.500z" fill="#c2c2c2" stroke="#9a9a9a" stroke-width=".8" stroke-linejoin="round"/><path d="M2 10.800 12.500 14.500 22 9.800M2 14.600 12.500 18.500 22 13.700M5.500 8.300V19.800M9 9.400V21.200M15.700 9V21M18.900 7.500V19.200M5.300 5.500 15.800 9M8.700 4 19 7.500" fill="none" stroke="#9a9a9a" stroke-width=".6"/><path d="M12.500 14.500 17 12.500 22 14.200V19L17.500 21.500 12.500 19.500z" fill="#e2e2e2" stroke="#9a9a9a" stroke-width=".7"/><path d="M12.500 14.500 17.500 16.500 22 14.200M17.500 16.500V21.500" fill="none" stroke="#9a9a9a" stroke-width=".6"/></svg>
<div class="vsep" style="left:606px;top:95px;height:24px"></div>
<svg class="ico" style="left:613px;top:95px" viewBox="0 0 24 24"><g transform="translate(1.5,0.5)"><path d="M0 3 5 .5 10.500 2.500V9L5.500 12 0 9.500z" fill="#d9d9d9" stroke="#7f7f7f" stroke-width=".8" stroke-linejoin="round"/><path d="M0 3 5.500 5.500 10.500 2.500M5.500 5.500V12M0 9.500 5 .5 M5.500 5.500 10.500 9" fill="none" stroke="#7f7f7f" stroke-width=".6"/></g><g transform="translate(12.5,9)"><path d="M0 3 5 .5 10.500 2.500V9L5.500 12 0 9.500z" fill="#d9d9d9" stroke="#7f7f7f" stroke-width=".8" stroke-linejoin="round"/><path d="M0 3 5.500 5.500 10.500 2.500M5.500 5.500V12M0 9.500 5 .5 M5.500 5.500 10.500 9" fill="none" stroke="#7f7f7f" stroke-width=".6"/></g><path d="M3.500 14 8 16l-1.200 1.300 3.500 1.700-1.500 2.500-3.300-2.200-1 1.700z" fill="#7f7f7f"/></svg>
<div class="tbend" style="left:642px;top:91px;height:32px"></div>
<svg class="handle" style="left:647px;top:93px" viewBox="0 0 3 27" ><rect x="0" y="0" width="2" height="2" fill="#fbfbfb"/><rect x="1" y="1" width="1.600" height="1.600" fill="#adadad"/><rect x="0" y="4" width="2" height="2" fill="#fbfbfb"/><rect x="1" y="5" width="1.600" height="1.600" fill="#adadad"/><rect x="0" y="8" width="2" height="2" fill="#fbfbfb"/><rect x="1" y="9" width="1.600" height="1.600" fill="#adadad"/><rect x="0" y="12" width="2" height="2" fill="#fbfbfb"/><rect x="1" y="13" width="1.600" height="1.600" fill="#adadad"/><rect x="0" y="16" width="2" height="2" fill="#fbfbfb"/><rect x="1" y="17" width="1.600" height="1.600" fill="#adadad"/><rect x="0" y="20" width="2" height="2" fill="#fbfbfb"/><rect x="1" y="21" width="1.600" height="1.600" fill="#adadad"/><rect x="0" y="24" width="2" height="2" fill="#fbfbfb"/><rect x="1" y="25" width="1.600" height="1.600" fill="#adadad"/></svg>
<svg class="ico" style="left:656px;top:95px" viewBox="0 0 24 24"><rect x="5" y="1" width="14" height="22" fill="#b4b4b4" stroke="#8b8b8b" stroke-width=".8"/><circle cx="12" cy="12" r="10" fill="#b9b9b9" fill-opacity=".85" stroke="#7d7d7d" stroke-width="2.400"/><path d="M5 5 19 19" stroke="#7d7d7d" stroke-width="2.400"/></svg>
<svg class="ico" style="left:686.5px;top:95px" viewBox="0 0 24 24"><rect x="5.500" y="1" width="13" height="22" fill="url(#gGr)" stroke="#939393" stroke-width=".9"/></svg>
<div class="vsep" style="left:717px;top:95px;height:24px"></div>
<div class="abs" style="left:721.5px;top:92px;width:30px;height:28.5px;box-sizing:border-box;background:#d5e8fa;border:1px solid #98c9f3;border-radius:2px"></div>
<svg class="ico" style="left:725px;top:95px" viewBox="0 0 24 24"><path d="M21.500 1.500v8.500h-8.500l3-3c-2.400-2-6.200-1.600-8.200 1-.7.900-1.100 1.900-1.200 3H2.500c.4-4.300 3.500-7.600 7.600-8.300 3.100-.5 6.100.5 8.300 2.600z" fill="#4a86d2" stroke="#1f4f96" stroke-width=".9" stroke-linejoin="round"/><path d="M2.500 22.500V14h8.500l-3 3c2.400 2 6.200 1.600 8.200-1 .7-.9 1.100-1.900 1.200-3h4.100c-.4 4.300-3.500 7.600-7.600 8.300-3.100.5-6.100-.5-8.300-2.600z" fill="#3b76c4" stroke="#1f4f96" stroke-width=".9" stroke-linejoin="round"/><path d="M4 9.500C5 6 8 3.800 11.500 3.500" fill="none" stroke="#9cc3f0" stroke-width="1"/></svg>
<svg class="ico" style="left:755px;top:95px" viewBox="0 0 24 24"><rect x="2.500" y="2.500" width="19" height="19" fill="#cdcdcd"/><path d="M.5 2.500h23M.5 12h23M.5 21.500h23M2.500 .5v23M12 .5v23M21.500 .5v23" stroke="#7f7f7f" stroke-width="2"/></svg>
<div class="vsep" style="left:785px;top:95px;height:24px"></div>
<svg class="ico" style="left:792px;top:95px" viewBox="0 0 24 24"><path d="M.5 23V15.500C6 14.500 9.500 10 12.500 1.500L22 5C19 10 15.500 13 14 15.500H23.500V23z" fill="#bdbdbd" stroke="#8d8d8d" stroke-width=".9" stroke-linejoin="round"/><path d="M1 22.500C9 21 13.500 17 14 15.500" fill="none" stroke="#9a9a9a" stroke-width=".7"/></svg>
<svg class="ico" style="left:823px;top:95px" viewBox="0 0 24 24"><path d="M1.500 5 11 1.500 22.500 4V18L13.500 22.500 1.500 19z" fill="#cfcfcf" stroke="#8a8a8a" stroke-width="1" stroke-linejoin="round"/><path d="M1.500 5 13.500 8 22.500 4M13.500 8V22.500" fill="none" stroke="#8a8a8a" stroke-width="1"/><path d="M3.500 7.500 11.500 9.500V19.500L3.500 17.500z" fill="#e9e9e9" stroke="#8a8a8a" stroke-width=".7"/><text x="16.500" y="21.500" text-anchor="middle" font-family="Liberation Sans,sans-serif" font-weight="bold" font-size="17" fill="#d9d9d9" stroke="#7a7a7a" stroke-width=".9">S</text></svg>
<svg class="ico" style="left:854px;top:95px" viewBox="0 0 24 24"><path d="M1.500 5 11 1.500 22.500 4V18L13.500 22.500 1.500 19z" fill="#cfcfcf" stroke="#8a8a8a" stroke-width="1" stroke-linejoin="round"/><path d="M1.500 5 13.500 8 22.500 4M13.500 8V22.500" fill="none" stroke="#8a8a8a" stroke-width="1"/><path d="M3.500 7.500 11.500 9.500V19.500L3.500 17.500z" fill="#e9e9e9" stroke="#8a8a8a" stroke-width=".7"/><path d="M5.500 17.500 8 9h2.500l1 9.500z" fill="#9c9c9c"/><path d="M15.500 9.500 20.500 7.500V17L15.500 19.500z" fill="#ececec" stroke="#8a8a8a" stroke-width=".7"/><path d="M16.500 17.500 18 10h1.500l.5 6z" fill="#9c9c9c"/></svg>
<svg class="ico" style="left:885px;top:95px" viewBox="0 0 24 24"><path d="M1.500 5 11 1.500 22.500 4V18L13.500 22.500 1.500 19z" fill="#cfcfcf" stroke="#8a8a8a" stroke-width="1" stroke-linejoin="round"/><path d="M1.500 5 13.500 8 22.500 4M13.500 8V22.500" fill="none" stroke="#8a8a8a" stroke-width="1"/><path d="M3.500 7.500 11.500 9.500V19.500L3.500 17.500z" fill="#e9e9e9" stroke="#8a8a8a" stroke-width=".7"/><path d="M4.500 9 7.500 9.500 10.500 18.500 6 17.500z" fill="#9c9c9c"/><path d="M15.500 9.500 20.500 7.500V17L15.500 19.500z" fill="#ececec" stroke="#8a8a8a" stroke-width=".7"/><path d="M16 10.500 18 9.500 20 16.500 17.500 17.500z" fill="#9c9c9c"/></svg>
<svg class="ico" style="left:916px;top:95px" viewBox="0 0 24 24"><path d="M1 5.500 15.500 1.500 23 17.500 8.500 23z" fill="#ececec" stroke="#9c9c9c" stroke-width=".9" stroke-linejoin="round"/><path d="M8 4c1 7 4 12 9 15.500M12 3c1 6 3.500 10.500 8 13.500" fill="none" stroke="#b4b4b4" stroke-width=".7"/></svg>
<svg class="ico" style="left:947px;top:95px" viewBox="0 0 24 24"><path d="M3.500 3.500 21.500 7 23 10 17 22H3c-1.500 0-2-1-1.500-2z" fill="#b4b4b4" stroke="#888" stroke-width=".8" stroke-linejoin="round"/><path d="M2 20.500 5.500 17.500 5 15.500 9 14.500 8.500 12.500 12.500 11.500 12 9.500 16 8.800 15.500 7 21.500 7" fill="none" stroke="#7d7d7d" stroke-width="1.600" stroke-linejoin="round"/><path d="M3.500 3.500 2 20" stroke="#888" stroke-width=".8"/><circle cx="3.500" cy="21" r="1.600" fill="#9a9a9a" stroke="#7d7d7d" stroke-width=".6"/><circle cx="21.500" cy="8.500" r="1.600" fill="#9a9a9a" stroke="#7d7d7d" stroke-width=".6"/></svg>
<svg class="ico" style="left:978px;top:95px" viewBox="0 0 24 24"><path d="M1.500 1.500h4.500V18h16.500v4.500h-21z" fill="#d9d9d9" stroke="#8a8a8a" stroke-width=".9" stroke-dasharray="1.600 .9"/><path d="M6 8 20 21M6 1.500 13 1M6 9 13.500 2" stroke="#8b8b8b" stroke-width="2"/><path d="M8 13 16 21H8z" fill="#a9a9a9"/><rect x="17.500" y="3" width="5.500" height="6" fill="#d9d9d9" stroke="#8a8a8a" stroke-width=".8"/><text x="20.300" y="8.300" text-anchor="middle" font-family="Liberation Sans,sans-serif" font-weight="bold" font-size="5.500" fill="#7a7a7a">K</text></svg>
<svg class="ico" style="left:1009px;top:95px" viewBox="0 0 24 24"><path d="M12 1 22.500 6.500v11L12 23 1.500 17.500v-11z" fill="#c6c6c6" stroke="#868686" stroke-width="1" stroke-linejoin="round"/><path d="M12 12 12 5M12 12 6 8.500M12 12 18 8.500M12 12 6 16M12 12 18 16M12 12V19.500" stroke="#8a8a8a" stroke-width=".9"/><circle cx="12" cy="12" r="1.900" fill="#ececec" stroke="#868686" stroke-width=".7"/><circle cx="12" cy="4.500" r="1.500" fill="#ececec" stroke="#868686" stroke-width=".6"/><circle cx="5.500" cy="8.300" r="1.500" fill="#ececec" stroke="#868686" stroke-width=".6"/><circle cx="18.500" cy="8.300" r="1.500" fill="#ececec" stroke="#868686" stroke-width=".6"/><circle cx="5.500" cy="16.300" r="1.500" fill="#ececec" stroke="#868686" stroke-width=".6"/><circle cx="18.500" cy="16.300" r="1.500" fill="#ececec" stroke="#868686" stroke-width=".6"/><circle cx="12" cy="20" r="1.500" fill="#ececec" stroke="#868686" stroke-width=".6"/></svg>
<div class="vsep" style="left:1039px;top:95px;height:24px"></div>
<svg class="ico" style="left:1046px;top:95px" viewBox="0 0 24 24"><circle cx="12" cy="12" r="10.800" fill="url(#gBSph)" stroke="#16335f" stroke-width="1.100"/></svg>
<div class="dd" style="left:1075.5px;top:105px"></div>
<div class="tbend" style="left:1087px;top:91px;height:32px"></div>
<svg class="handle" style="left:1092px;top:93px" viewBox="0 0 3 27" ><rect x="0" y="0" width="2" height="2" fill="#fbfbfb"/><rect x="1" y="1" width="1.600" height="1.600" fill="#adadad"/><rect x="0" y="4" width="2" height="2" fill="#fbfbfb"/><rect x="1" y="5" width="1.600" height="1.600" fill="#adadad"/><rect x="0" y="8" width="2" height="2" fill="#fbfbfb"/><rect x="1" y="9" width="1.600" height="1.600" fill="#adadad"/><rect x="0" y="12" width="2" height="2" fill="#fbfbfb"/><rect x="1" y="13" width="1.600" height="1.600" fill="#adadad"/><rect x="0" y="16" width="2" height="2" fill="#fbfbfb"/><rect x="1" y="17" width="1.600" height="1.600" fill="#adadad"/><rect x="0" y="20" width="2" height="2" fill="#fbfbfb"/><rect x="1" y="21" width="1.600" height="1.600" fill="#adadad"/><rect x="0" y="24" width="2" height="2" fill="#fbfbfb"/><rect x="1" y="25" width="1.600" height="1.600" fill="#adadad"/></svg>
<svg class="ico" style="left:1101px;top:95px" viewBox="0 0 24 24"><path d="M1.500 5 11 1.500 22.500 4V18L13.500 22.500 1.500 19z" fill="#c9c9c9" stroke="#868686" stroke-width="1" stroke-linejoin="round"/><path d="M1.500 5 13.500 8 22.500 4M13.500 8V22.500" fill="none" stroke="#868686" stroke-width="1"/><path d="M3.500 7.300V18.300M5.500 7.800V18.800M7.500 8.300V19.300M9.500 8.800V19.800M11.500 9.300V20.300" stroke="#8f8f8f" stroke-width=".8"/><path d="M15.500 9.500 20.500 7.500V17L15.500 19.500z" fill="#ececec" stroke="#868686" stroke-width=".7"/><path d="M16.500 17.500 18 10h1.500l.5 6z" fill="#9c9c9c"/></svg>
<svg class="ico" style="left:1132px;top:95px" viewBox="0 0 24 24"><path d="M1.500 5 11 1.500 22.500 4V18L13.500 22.500 1.500 19z" fill="#c9c9c9" stroke="#868686" stroke-width="1" stroke-linejoin="round"/><path d="M1.500 5 13.500 8 22.500 4M13.500 8V22.500" fill="none" stroke="#868686" stroke-width="1"/><path d="M3.500 7.300V18.300M5.500 7.800V18.800M7.500 8.300V19.300M9.500 8.800V19.800M11.500 9.300V20.300" stroke="#8f8f8f" stroke-width=".8"/><path d="M15.500 9.500 20.500 7.500V17L15.500 19.500z" fill="#ececec" stroke="#868686" stroke-width=".7"/><path d="M16.500 17.500 18 10h1.500l.5 6z" fill="#9c9c9c"/><path d="M1 2 23 22M23 2 1 22" stroke="#8a8a8a" stroke-width="1.200"/></svg>
<svg class="ico" style="left:1163px;top:95px" viewBox="0 0 24 24"><path d="M1.500 5 6.500 1.500 11 4.500V13L6.500 16.500 1.500 13.500z" fill="#9a9a9a" stroke="#777" stroke-width=".7"/><path d="M3 6.500V13M5 7.500V14.500M7.500 7V15" stroke="#c4c4c4" stroke-width=".7"/><path d="M6.500 8 13 6.500 22.500 13V20L17 22.500 6.500 16z" fill="#8d8d8d" stroke="#777" stroke-width=".7"/><path d="M9 9.500 13 8.800 17 11.800V16.500L14 17.500 9 14.500z" fill="#b4b4b4" stroke="#808080" stroke-width=".5"/><path d="M17 15 22.500 13V20L17 22.500z" fill="#a6a6a6" stroke="#777" stroke-width=".6"/><path d="M18.500 15V21.500M20.500 14.200V20.700" stroke="#cfcfcf" stroke-width=".7"/></svg>
<!-- Combo view dock -->
<div class="abs" style="left:-1px;top:125px;width:413px;height:17px;background:#dadada;border:1px solid #c6c6c6;box-sizing:content-box"></div>
<div class="t" style="left:0;top:128.5px;font-size:11.5px;letter-spacing:0.15px">Combo View</div>
<svg class="abs" style="left:398px;top:130px" width="10" height="10" viewBox="0 0 10 10"><rect x="3" y="0.75" width="6" height="5.5" fill="none" stroke="#222" stroke-width="1.2"/><rect x="3" y="0" width="6.6" height="2" fill="#222"/><rect x="0.75" y="3.75" width="6" height="5" fill="#dadada" stroke="#222" stroke-width="1.2"/><rect x="0.2" y="3" width="7.1" height="2" fill="#222"/></svg>
<!-- tabs -->
<div class="abs" style="left:0;top:170px;width:412px;height:1px;background:#fff"></div>
<div class="abs" style="left:-1px;top:149px;width:45px;height:21px;background:#f2f2f2;border:1px solid #e8e8e8;border-bottom:none;box-sizing:border-box"></div>
<div class="abs" style="left:44px;top:147px;width:71px;height:24px;background:#fafafa;border:1px solid #eaeaea;border-bottom:none;box-sizing:border-box"></div>
<div class="t" style="left:5px;top:153px;letter-spacing:-.35px">Model</div>
<svg class="abs" style="left:57px;top:149px" width="18" height="18" viewBox="0 0 18 18"><path d="M1.500 4 5.500 .8 15.200 11.200 16.800 16.400 11.800 14.600z" fill="#1f4170"/><path d="M3.500 2.600 13.600 13" stroke="#3f6fae" stroke-width="1.600"/><path d="M15.200 11.200 16.800 16.400 11.800 14.600z" fill="#f6f6f6" stroke="#222" stroke-width=".6"/><path d="M16.800 16.400 16 14 14.500 15.500z" fill="#222"/></svg>
<div class="t" style="left:77px;top:153px;letter-spacing:-.3px">Tasks</div>
<!-- task panel -->
<div class="abs" style="left:0;top:170px;width:412px;height:692px;background:#fcfcfc"></div>
<div class="abs" id="tpanel" style="left:0;top:171px;width:410px;height:689px;background:linear-gradient(to bottom,rgb(171,171,193) 0,rgb(51,51,101) 30%,rgb(51,51,101) 100%)"></div>
<div class="btn" style="left:131px;top:190px;width:73px;height:21px">OK</div>
<div class="btn" style="left:212px;top:190px;width:73px;height:21px">Cancel</div>
<!-- group 1 -->
<div class="ghead" style="top:229px"><span style="left:23px">Mesh group</span></div>
<div class="gcont" style="top:254px;height:123px"></div>
<svg class="abs" style="left:10.5px;top:233px;overflow:visible" width="18" height="16" viewBox="0 0 18 16"><path d="M.8 .4H9.300V3.500H4.300V5.700H8V8.500H4.300V15.500H.8z" fill="#e81c1c" stroke="#8a0f0f" stroke-width=".7" stroke-linejoin="round"/><path d="M1.500 1.100H8.600" stroke="#ff5a4a" stroke-width=".6"/><g transform="translate(10.400,10) scale(.93)"><path d="M-0.89 -5.63 0.89 -5.63 1.01 -3.77 1.95 -3.38 3.35 -4.61 4.61 -3.35 3.38 -1.95 3.77 -1.01 5.63 -0.89 5.63 0.89 3.77 1.01 3.38 1.95 4.61 3.35 3.35 4.61 1.95 3.38 1.01 3.77 0.89 5.63 -0.89 5.63 -1.01 3.77 -1.95 3.38 -3.35 4.61 -4.61 3.35 -3.38 1.95 -3.77 1.01 -5.63 0.89 -5.63 -0.89 -3.77 -1.01 -3.38 -1.95 -4.61 -3.35 -3.35 -4.61 -1.95 -3.38 -1.01 -3.77z" fill="#4a7cbc" stroke="#1f417c" stroke-width=".7" stroke-linejoin="round"/><circle r="1.700" fill="#fafafa" stroke="#1f417c" stroke-width=".5"/></g></svg><svg class="abs" style="left:390.5px;top:233.3px" width="16" height="16" viewBox="0 0 16 16"><circle cx="8" cy="8.300" r="7.400" fill="#9aa2c0" opacity=".5"/><circle cx="8" cy="8" r="7.200" fill="#fff" stroke="#cfd6ea" stroke-width=".8"/><path d="M4.800 7.400 8 4.300 11.200 7.400M4.800 11.200 8 8.100 11.200 11.200" fill="none" stroke="#0c2a9c" stroke-width="1.500"/></svg>
<div class="abs" style="left:21px;top:279px;width:373px;height:41px;border:1px solid #c3c7d4;border-radius:3px;box-sizing:border-box"></div>
<div class="t" style="left:33px;top:273px;padding:0 3px;background:#d6dff7;letter-spacing:.07px">Identifier used for mesh export</div>
<div class="radio" style="left:33px;top:293px"></div><div class="t" style="left:51px;top:293px;letter-spacing:-.3px">Name</div>
<div class="radio on" style="left:89px;top:293px"></div><div class="t" style="left:107px;top:293px;letter-spacing:-.2px">Label</div>
<!-- group 2 -->
<div class="ghead" style="top:384px"><span style="left:23px;letter-spacing:.17px">Geometry reference selector for a Solid, Face, Edge, Vertex</span></div>
<div class="gcont" style="top:409px;height:316px"></div>
<svg class="abs" style="left:10.5px;top:388px;overflow:visible" width="18" height="16" viewBox="0 0 18 16"><path d="M.8 .4H9.300V3.500H4.300V5.700H8V8.500H4.300V15.500H.8z" fill="#e81c1c" stroke="#8a0f0f" stroke-width=".7" stroke-linejoin="round"/><path d="M1.500 1.100H8.600" stroke="#ff5a4a" stroke-width=".6"/><g transform="translate(10.400,10) scale(.93)"><path d="M-0.89 -5.63 0.89 -5.63 1.01 -3.77 1.95 -3.38 3.35 -4.61 4.61 -3.35 3.38 -1.95 3.77 -1.01 5.63 -0.89 5.63 0.89 3.77 1.01 3.38 1.95 4.61 3.35 3.35 4.61 1.95 3.38 1.01 3.77 0.89 5.63 -0.89 5.63 -1.01 3.77 -1.95 3.38 -3.35 4.61 -4.61 3.35 -3.38 1.95 -3.77 1.01 -5.63 0.89 -5.63 -0.89 -3.77 -1.01 -3.38 -1.95 -4.61 -3.35 -3.35 -4.61 -1.95 -3.38 -1.01 -3.77z" fill="#4a7cbc" stroke="#1f417c" stroke-width=".7" stroke-linejoin="round"/><circle r="1.700" fill="#fafafa" stroke="#1f417c" stroke-width=".5"/></g></svg><svg class="abs" style="left:390.5px;top:388.3px" width="16" height="16" viewBox="0 0 16 16"><circle cx="8" cy="8.300" r="7.400" fill="#9aa2c0" opacity=".5"/><circle cx="8" cy="8" r="7.200" fill="#fff" stroke="#cfd6ea" stroke-width=".8"/><path d="M4.800 7.400 8 4.300 11.200 7.400M4.800 11.200 8 8.100 11.200 11.200" fill="none" stroke="#0c2a9c" stroke-width="1.500"/></svg>
<div class="t" style="left:19px;top:423px;width:380px;white-space:normal;letter-spacing:-.1px">Click on "Add" and select geometric elements to add them to the list.<br>The following geometry elements can be selected: <b>Solid, Face, Edge,<br>Vertex</b></div>
<div class="btn" style="left:20px;top:469px;width:375px;height:20px">Add</div>
<div class="abs" style="left:19px;top:496px;width:377px;height:192px;background:#fff;border:1px solid #7a7a7a;box-sizing:border-box"></div>
<div class="abs" style="left:21px;top:549px;width:373px;height:17px;background:#d9d9d9"></div>
<div class="t li" style="left:24px;top:500px">BaseFeature:Face1</div>
<div class="t li" style="left:24px;top:517px">BaseFeature:Face2</div>
<div class="t li" style="left:24px;top:534px">BaseFeature:Face3</div>
<div class="t li" style="left:24px;top:551px">BaseFeature:Face5</div>
<div class="t" style="left:18px;top:696px;letter-spacing:-.26px">Selection mode</div>
<div class="radio on" style="left:147px;top:696px"></div><div class="t" style="left:165px;top:696px">Face, Edge, Vertex</div>
<div class="radio" style="left:274px;top:696px"></div><div class="t" style="left:292px;top:696px;letter-spacing:-.35px">Solid</div>
<svg class="abs" style="left:418px;top:124px" width="1476" height="718" viewBox="418 124 1476 718">
<defs><linearGradient id="bgv" x1="0" y1="0" x2="0" y2="1"><stop offset="0" stop-color="rgb(51,51,101)"/><stop offset="1" stop-color="rgb(153,153,178)"/></linearGradient>
<linearGradient id="wg" gradientUnits="userSpaceOnUse" x1="576.4" y1="532.9" x2="705.0" y2="843.3">
<stop offset="0.0000" stop-color="#161616"/>
<stop offset="0.0060" stop-color="#262626"/>
<stop offset="0.0179" stop-color="#383838"/>
<stop offset="0.0417" stop-color="#474747"/>
<stop offset="0.0833" stop-color="#535353"/>
<stop offset="0.1488" stop-color="#5d5d5d"/>
<stop offset="0.2381" stop-color="#656565"/>
<stop offset="0.3571" stop-color="#6a6a6a"/>
<stop offset="0.5357" stop-color="#6e6e6e"/>
<stop offset="0.7440" stop-color="#717171"/>
<stop offset="1.0000" stop-color="#747474"/>
</linearGradient></defs>
<rect x="418" y="124" width="1476" height="718" fill="url(#bgv)"/>
<polygon points="576.9,534.1 1493.9,154.1 1493.4,152.9 1493.6,152.8 1493.8,152.7 1494.1,152.6 1494.3,152.6 1494.6,152.5 1494.8,152.4 1495.0,152.3 1495.2,152.2 1495.4,152.2 1495.6,152.1 1495.8,152.1 1496.0,152.0 1496.2,151.9 1496.4,151.9 1496.6,151.8 1496.8,151.8 1497.1,151.7 1497.4,151.7 1497.8,151.6 1498.2,151.6 1498.7,151.6 1499.2,151.5 1499.7,151.5 1500.3,151.4 1501.0,151.4 1501.6,151.3 1502.3,151.3 1503.0,151.3 1503.7,151.2 1504.3,151.2 1505.0,151.2 1505.6,151.1 1506.2,151.1 1506.8,151.1 1507.3,151.1 1507.8,151.1 1508.3,151.0 1508.8,151.0 1509.2,151.0 1509.7,151.0 1510.1,151.0 1510.5,150.9 1511.0,150.9 1511.4,150.9 1511.9,150.9 1512.4,150.9 1512.9,151.0 1513.4,151.0 1514.0,151.0 1514.5,151.1 1515.1,151.1 1515.7,151.2 1516.3,151.3 1516.9,151.3 1517.5,151.4 1518.1,151.5 1518.8,151.6 1519.4,151.7 1520.1,151.8 1520.8,151.9 1521.5,152.0 1522.2,152.1 1522.9,152.2 1523.6,152.3 1524.3,152.4 1524.9,152.5 1525.6,152.6 1526.3,152.6 1527.0,152.7 1527.8,152.9 1528.6,153.0 1529.4,153.2 1530.3,153.4 1531.3,153.6 1532.4,153.9 1533.5,154.2 1534.7,154.6 1536.0,155.0 1537.4,155.4 1538.8,155.9 1540.3,156.5 1541.9,157.0 1543.5,157.6 1545.1,158.2 1546.8,158.8 1548.5,159.4 1550.2,160.0 1552.0,160.6 1553.7,161.2 1555.5,161.8 1557.3,162.4 1559.2,163.0 1561.1,163.5 1563.1,164.1 1565.1,164.7 1567.1,165.3 1569.2,165.9 1571.2,166.5 1573.3,167.1 1575.3,167.8 1577.3,168.4 1579.3,169.1 1581.2,169.7 1583.0,170.4 1584.8,171.1 1586.4,171.7 1588.0,172.4 1589.6,173.1 1591.1,173.8 1592.6,174.4 1594.1,175.1 1595.6,175.9 1597.2,176.6 1598.8,177.4 1600.5,178.2 1602.2,179.1 1604.0,180.0 1606.0,180.9 1608.0,181.9 1610.1,182.9 1612.2,183.8 1614.3,184.9 1616.5,185.9 1618.7,187.0 1621.0,188.1 1623.4,189.2 1625.9,190.5 1628.4,191.7 1631.0,193.1 1633.7,194.5 1636.6,196.0 1639.5,197.6 1642.6,199.3 1645.8,201.1 1649.2,203.0 1652.7,205.0 1656.3,207.1 1659.9,209.2 1663.7,211.4 1667.5,213.6 1671.3,215.9 1675.1,218.1 1678.9,220.3 1682.6,222.6 1686.3,224.8 1690.0,226.9 1693.6,229.0 1697.4,231.2 1701.1,233.4 1704.9,235.7 1708.7,237.9 1712.5,240.1 1716.2,242.4 1720.0,244.6 1723.6,246.8 1727.2,248.9 1730.8,251.0 1734.2,253.1 1737.5,255.1 1740.6,257.0 1743.6,258.8 1746.5,260.6 1749.3,262.4 1752.1,264.1 1754.7,265.7 1757.3,267.4 1759.8,268.9 1762.2,270.5 1764.6,272.0 1766.9,273.5 1769.2,275.0 1771.5,276.5 1773.8,278.0 1776.0,279.5 1778.2,281.0 1780.3,282.4 1782.3,283.7 1784.3,285.1 1786.2,286.4 1788.0,287.7 1789.9,288.9 1791.7,290.2 1793.5,291.5 1795.4,292.9 1797.3,294.2 1799.2,295.6 1801.2,297.0 1803.2,298.5 1805.3,300.0 1807.4,301.6 1809.6,303.2 1811.8,304.8 1814.0,306.5 1816.3,308.2 1818.5,309.9 1820.8,311.6 1823.0,313.3 1825.3,315.0 1827.6,316.7 1829.8,318.4 1832.1,320.1 1834.3,321.8 1836.6,323.5 1838.9,325.3 1841.2,327.1 1843.6,328.9 1846.0,330.7 1848.4,332.5 1850.8,334.3 1853.1,336.1 1855.4,337.8 1857.6,339.5 1859.7,341.1 1861.7,342.6 1863.6,344.0 1865.3,345.3 1866.9,346.5 1868.3,347.5 1869.7,348.5 1870.9,349.3 1872.0,350.1 1873.1,350.8 1874.1,351.5 1875.1,352.1 1876.0,352.8 1877.0,353.4 1877.9,354.0 1878.9,354.7 1879.9,355.4 1881.0,356.1 964.0,736.1 962.9,735.4 961.9,734.7 960.9,734.0 960.0,733.4 959.0,732.8 958.1,732.1 957.1,731.5 956.1,730.8 955.0,730.1 953.9,729.3 952.7,728.5 951.3,727.5 949.9,726.5 948.3,725.3 946.6,724.0 944.7,722.6 942.7,721.1 940.6,719.5 938.4,717.8 936.1,716.1 933.8,714.3 931.4,712.5 929.0,710.7 926.6,708.9 924.2,707.1 921.9,705.3 919.6,703.5 917.3,701.8 915.1,700.1 912.8,698.4 910.6,696.7 908.3,695.0 906.0,693.3 903.8,691.6 901.5,689.9 899.3,688.2 897.0,686.5 894.8,684.8 892.6,683.2 890.4,681.6 888.3,680.0 886.2,678.5 884.2,677.0 882.2,675.6 880.3,674.2 878.4,672.9 876.5,671.5 874.7,670.2 872.9,668.9 871.0,667.7 869.2,666.4 867.3,665.1 865.3,663.7 863.3,662.4 861.2,661.0 859.0,659.5 856.8,658.0 854.5,656.5 852.2,655.0 849.9,653.5 847.6,652.0 845.2,650.5 842.8,648.9 840.3,647.4 837.7,645.7 835.1,644.1 832.3,642.4 829.5,640.6 826.6,638.8 823.6,637.0 820.5,635.1 817.2,633.1 813.8,631.0 810.2,628.9 806.6,626.8 803.0,624.6 799.2,622.4 795.5,620.1 791.7,617.9 787.9,615.7 784.1,613.4 780.4,611.2 776.6,609.0 773.0,606.9 769.3,604.8 765.6,602.6 761.9,600.3 758.1,598.1 754.3,595.9 750.5,593.6 746.7,591.4 742.9,589.2 739.3,587.1 735.7,585.0 732.2,583.0 728.8,581.1 725.6,579.3 722.5,577.6 719.6,576.0 716.7,574.5 714.0,573.1 711.4,571.7 708.9,570.5 706.4,569.2 704.0,568.1 701.7,567.0 699.5,565.9 697.3,564.9 695.2,563.8 693.1,562.9 691.0,561.9 689.0,560.9 687.0,560.0 685.2,559.1 683.5,558.2 681.8,557.4 680.2,556.6 678.6,555.9 677.1,555.1 675.6,554.4 674.1,553.8 672.6,553.1 671.0,552.4 669.4,551.7 667.8,551.1 666.0,550.4 664.2,549.7 662.3,549.1 660.3,548.4 658.3,547.8 656.3,547.1 654.2,546.5 652.2,545.9 650.1,545.3 648.1,544.7 646.1,544.1 644.1,543.5 642.2,543.0 640.3,542.4 638.5,541.8 636.7,541.2 635.0,540.6 633.2,540.0 631.5,539.4 629.8,538.8 628.1,538.2 626.5,537.6 624.9,537.0 623.3,536.5 621.8,535.9 620.4,535.4 619.0,535.0 617.7,534.6 616.5,534.2 615.4,533.9 614.3,533.6 613.3,533.4 612.4,533.2 611.6,533.0 610.8,532.9 610.0,532.7 609.3,532.6 608.6,532.6 607.9,532.5 607.3,532.4 606.6,532.3 605.9,532.2 605.2,532.1 604.5,532.0 603.8,531.9 603.1,531.8 602.4,531.7 601.8,531.6 601.1,531.5 600.5,531.4 599.9,531.3 599.3,531.3 598.7,531.2 598.1,531.1 597.5,531.1 597.0,531.0 596.4,531.0 595.9,531.0 595.4,530.9 594.9,530.9 594.4,530.9 594.0,530.9 593.5,530.9 593.1,531.0 592.7,531.0 592.2,531.0 591.8,531.0 591.3,531.0 590.8,531.1 590.3,531.1 589.8,531.1 589.2,531.1 588.6,531.1 588.0,531.2 587.3,531.2 586.7,531.2 586.0,531.3 585.3,531.3 584.6,531.3 584.0,531.4 583.3,531.4 582.7,531.5 582.2,531.5 581.7,531.6 581.2,531.6 580.8,531.6 580.4,531.7 580.1,531.7 579.8,531.8 579.6,531.8 579.4,531.9 579.2,531.9 579.0,532.0 578.8,532.1 578.6,532.1 578.4,532.2 578.2,532.2 578.0,532.3 577.8,532.4 577.6,532.5 577.3,532.6 577.1,532.6 576.8,532.7 576.6,532.8 576.4,532.9" fill="url(#wg)" shape-rendering="crispEdges"/>
<polyline points="1493.4,152.9 1493.6,152.8 1493.8,152.7 1494.1,152.6 1494.3,152.6 1494.6,152.5 1494.8,152.4 1495.0,152.3 1495.2,152.2 1495.4,152.2 1495.6,152.1 1495.8,152.1 1496.0,152.0 1496.2,151.9 1496.4,151.9 1496.6,151.8 1496.8,151.8 1497.1,151.7 1497.4,151.7 1497.8,151.6 1498.2,151.6 1498.7,151.6 1499.2,151.5 1499.7,151.5 1500.3,151.4 1501.0,151.4 1501.6,151.3 1502.3,151.3 1503.0,151.3 1503.7,151.2 1504.3,151.2 1505.0,151.2 1505.6,151.1 1506.2,151.1 1506.8,151.1 1507.3,151.1 1507.8,151.1 1508.3,151.0 1508.8,151.0 1509.2,151.0 1509.7,151.0 1510.1,151.0 1510.5,150.9 1511.0,150.9 1511.4,150.9 1511.9,150.9 1512.4,150.9 1512.9,151.0 1513.4,151.0 1514.0,151.0 1514.5,151.1 1515.1,151.1 1515.7,151.2 1516.3,151.3 1516.9,151.3 1517.5,151.4 1518.1,151.5 1518.8,151.6 1519.4,151.7 1520.1,151.8 1520.8,151.9 1521.5,152.0 1522.2,152.1 1522.9,152.2 1523.6,152.3 1524.3,152.4 1524.9,152.5 1525.6,152.6 1526.3,152.6 1527.0,152.7 1527.8,152.9 1528.6,153.0 1529.4,153.2 1530.3,153.4 1531.3,153.6 1532.4,153.9 1533.5,154.2 1534.7,154.6 1536.0,155.0 1537.4,155.4 1538.8,155.9 1540.3,156.5 1541.9,157.0 1543.5,157.6 1545.1,158.2 1546.8,158.8 1548.5,159.4 1550.2,160.0 1552.0,160.6 1553.7,161.2 1555.5,161.8 1557.3,162.4 1559.2,163.0 1561.1,163.5 1563.1,164.1 1565.1,164.7 1567.1,165.3 1569.2,165.9 1571.2,166.5 1573.3,167.1 1575.3,167.8 1577.3,168.4 1579.3,169.1 1581.2,169.7 1583.0,170.4 1584.8,171.1 1586.4,171.7 1588.0,172.4 1589.6,173.1 1591.1,173.8 1592.6,174.4 1594.1,175.1 1595.6,175.9 1597.2,176.6 1598.8,177.4 1600.5,178.2 1602.2,179.1 1604.0,180.0 1606.0,180.9 1608.0,181.9 1610.1,182.9 1612.2,183.8 1614.3,184.9 1616.5,185.9 1618.7,187.0 1621.0,188.1 1623.4,189.2 1625.9,190.5 1628.4,191.7 1631.0,193.1 1633.7,194.5 1636.6,196.0 1639.5,197.6 1642.6,199.3 1645.8,201.1 1649.2,203.0 1652.7,205.0 1656.3,207.1 1659.9,209.2 1663.7,211.4 1667.5,213.6 1671.3,215.9 1675.1,218.1 1678.9,220.3 1682.6,222.6 1686.3,224.8 1690.0,226.9 1693.6,229.0 1697.4,231.2 1701.1,233.4 1704.9,235.7 1708.7,237.9 1712.5,240.1 1716.2,242.4 1720.0,244.6 1723.6,246.8 1727.2,248.9 1730.8,251.0 1734.2,253.1 1737.5,255.1 1740.6,257.0 1743.6,258.8 1746.5,260.6 1749.3,262.4 1752.1,264.1 1754.7,265.7 1757.3,267.4 1759.8,268.9 1762.2,270.5 1764.6,272.0 1766.9,273.5 1769.2,275.0 1771.5,276.5 1773.8,278.0 1776.0,279.5 1778.2,281.0 1780.3,282.4 1782.3,283.7 1784.3,285.1 1786.2,286.4 1788.0,287.7 1789.9,288.9 1791.7,290.2 1793.5,291.5 1795.4,292.9 1797.3,294.2 1799.2,295.6 1801.2,297.0 1803.2,298.5 1805.3,300.0 1807.4,301.6 1809.6,303.2 1811.8,304.8 1814.0,306.5 1816.3,308.2 1818.5,309.9 1820.8,311.6 1823.0,313.3 1825.3,315.0 1827.6,316.7 1829.8,318.4 1832.1,320.1 1834.3,321.8 1836.6,323.5 1838.9,325.3 1841.2,327.1 1843.6,328.9 1846.0,330.7 1848.4,332.5 1850.8,334.3 1853.1,336.1 1855.4,337.8 1857.6,339.5 1859.7,341.1 1861.7,342.6 1863.6,344.0 1865.3,345.3 1866.9,346.5 1868.3,347.5 1869.7,348.5 1870.9,349.3 1872.0,350.1 1873.1,350.8 1874.1,351.5 1875.1,352.1 1876.0,352.8 1877.0,353.4 1877.9,354.0 1878.9,354.7 1879.9,355.4 1881.0,356.1 964.0,736.1" fill="none" stroke="#151515" stroke-width="1.9" stroke-linejoin="round" stroke-linecap="round" shape-rendering="crispEdges"/>
<polygon points="571.7,539.6 571.7,539.3 571.7,539.0 571.7,538.8 571.7,538.6 571.8,538.3 571.8,538.1 571.9,537.9 572.0,537.7 572.0,537.5 572.1,537.2 572.2,537.0 572.3,536.8 572.4,536.6 572.5,536.3 572.7,536.1 572.8,535.9 573.0,535.7 573.1,535.4 573.3,535.2 573.5,535.0 573.6,534.8 573.8,534.6 574.0,534.4 574.2,534.2 574.4,534.1 574.6,533.9 574.8,533.7 575.0,533.6 575.2,533.5 575.4,533.3 575.7,533.2 575.9,533.1 576.1,533.0 576.4,532.9 576.6,532.8 576.8,532.7 577.1,532.6 577.3,532.6 577.6,532.5 577.8,532.4 578.0,532.3 578.2,532.2 578.4,532.2 578.6,532.1 578.8,532.1 579.0,532.0 579.2,531.9 579.4,531.9 579.6,531.8 579.8,531.8 580.1,531.7 580.4,531.7 580.8,531.6 581.2,531.6 581.7,531.6 582.2,531.5 582.7,531.5 583.3,531.4 584.0,531.4 584.6,531.3 585.3,531.3 586.0,531.3 586.7,531.2 587.3,531.2 588.0,531.2 588.6,531.1 589.2,531.1 589.8,531.1 590.3,531.1 590.8,531.1 591.3,531.0 591.8,531.0 592.2,531.0 592.7,531.0 593.1,531.0 593.5,530.9 594.0,530.9 594.4,530.9 594.9,530.9 595.4,530.9 595.9,531.0 596.4,531.0 597.0,531.0 597.5,531.1 598.1,531.1 598.7,531.2 599.3,531.3 599.9,531.3 600.5,531.4 601.1,531.5 601.8,531.6 602.4,531.7 603.1,531.8 603.8,531.9 604.5,532.0 605.2,532.1 605.9,532.2 606.6,532.3 607.3,532.4 607.9,532.5 608.6,532.6 609.3,532.6 610.0,532.7 610.8,532.9 611.6,533.0 612.4,533.2 613.3,533.4 614.3,533.6 615.4,533.9 616.5,534.2 617.7,534.6 619.0,535.0 620.4,535.4 621.8,535.9 623.3,536.5 624.9,537.0 626.5,537.6 628.1,538.2 629.8,538.8 631.5,539.4 633.2,540.0 635.0,540.6 636.7,541.2 638.5,541.8 640.3,542.4 642.2,543.0 644.1,543.5 646.1,544.1 648.1,544.7 650.1,545.3 652.2,545.9 654.2,546.5 656.3,547.1 658.3,547.8 660.3,548.4 662.3,549.1 664.2,549.7 666.0,550.4 667.8,551.1 669.4,551.7 671.0,552.4 672.6,553.1 674.1,553.8 675.6,554.4 677.1,555.1 678.6,555.9 680.2,556.6 681.8,557.4 683.5,558.2 685.2,559.1 687.0,560.0 689.0,560.9 691.0,561.9 693.1,562.9 695.2,563.8 697.3,564.9 699.5,565.9 701.7,567.0 704.0,568.1 706.4,569.2 708.9,570.5 711.4,571.7 714.0,573.1 716.7,574.5 719.6,576.0 722.5,577.6 725.6,579.3 728.8,581.1 732.2,583.0 735.7,585.0 739.3,587.1 742.9,589.2 746.7,591.4 750.5,593.6 754.3,595.9 758.1,598.1 761.9,600.3 765.6,602.6 769.3,604.8 773.0,606.9 776.6,609.0 780.4,611.2 784.1,613.4 787.9,615.7 791.7,617.9 795.5,620.1 799.2,622.4 803.0,624.6 806.6,626.8 810.2,628.9 813.8,631.0 817.2,633.1 820.5,635.1 823.6,637.0 826.6,638.8 829.5,640.6 832.3,642.4 835.1,644.1 837.7,645.7 840.3,647.4 842.8,648.9 845.2,650.5 847.6,652.0 849.9,653.5 852.2,655.0 854.5,656.5 856.8,658.0 859.0,659.5 861.2,661.0 863.3,662.4 865.3,663.7 867.3,665.1 869.2,666.4 871.0,667.7 872.9,668.9 874.7,670.2 876.5,671.5 878.4,672.9 880.3,674.2 882.2,675.6 884.2,677.0 886.2,678.5 888.3,680.0 890.4,681.6 892.6,683.2 894.8,684.8 897.0,686.5 899.3,688.2 901.5,689.9 903.8,691.6 906.0,693.3 908.3,695.0 910.6,696.7 912.8,698.4 915.1,700.1 917.3,701.8 919.6,703.5 921.9,705.3 924.2,707.1 926.6,708.9 929.0,710.7 931.4,712.5 933.8,714.3 936.1,716.1 938.4,717.8 940.6,719.5 942.7,721.1 944.7,722.6 946.6,724.0 948.3,725.3 949.9,726.5 951.3,727.5 952.7,728.5 953.9,729.3 955.0,730.1 956.1,730.8 957.1,731.5 958.1,732.1 959.0,732.8 960.0,733.4 960.9,734.0 961.9,734.7 962.9,735.4 964.0,736.1 964.0,736.1 962.9,735.6 961.9,735.1 960.9,734.6 960.0,734.2 959.0,733.7 958.1,733.2 957.1,732.8 956.1,732.3 955.0,731.8 953.9,731.2 952.7,730.7 951.3,730.1 949.9,729.4 948.3,728.7 946.6,727.9 944.8,727.2 943.0,726.3 941.0,725.5 939.0,724.6 936.9,723.7 934.7,722.8 932.5,721.8 930.1,720.8 927.7,719.8 925.3,718.7 922.7,717.7 920.0,716.6 917.3,715.5 914.5,714.4 911.5,713.2 908.3,712.0 905.1,710.8 901.8,709.5 898.4,708.2 895.0,706.9 891.5,705.6 888.0,704.3 884.5,703.0 881.0,701.7 877.5,700.3 874.1,699.0 870.7,697.7 867.4,696.4 864.1,695.1 860.7,693.8 857.4,692.5 854.1,691.2 850.8,689.8 847.5,688.5 844.1,687.2 840.8,685.9 837.5,684.5 834.2,683.2 830.8,681.8 827.5,680.5 824.2,679.1 820.8,677.7 817.4,676.3 813.9,674.9 810.4,673.4 806.9,671.9 803.4,670.5 799.9,669.0 796.5,667.6 793.1,666.1 789.8,664.7 786.6,663.3 783.4,662.0 780.4,660.7 777.6,659.4 774.9,658.2 772.3,657.0 769.8,655.8 767.5,654.7 765.2,653.6 763.0,652.6 760.8,651.5 758.8,650.5 756.7,649.5 754.7,648.4 752.7,647.5 750.7,646.5 748.6,645.5 746.6,644.5 744.6,643.5 742.6,642.6 740.7,641.7 738.8,640.8 737.0,640.0 735.2,639.1 733.4,638.2 731.6,637.4 729.8,636.5 727.9,635.7 726.0,634.8 724.1,633.8 722.1,632.9 720.1,631.9 718.0,630.9 715.8,629.8 713.6,628.7 711.3,627.6 708.9,626.4 706.6,625.2 704.2,624.1 701.9,622.9 699.5,621.7 697.2,620.6 694.9,619.5 692.7,618.4 690.6,617.3 688.5,616.3 686.5,615.3 684.6,614.4 682.7,613.5 680.8,612.6 679.0,611.7 677.2,610.8 675.5,610.0 673.7,609.1 672.0,608.3 670.2,607.5 668.5,606.6 666.8,605.8 665.0,605.0 663.2,604.1 661.4,603.2 659.5,602.3 657.6,601.5 655.6,600.5 653.6,599.6 651.7,598.7 649.8,597.9 647.9,597.0 646.0,596.1 644.2,595.3 642.5,594.5 640.9,593.7 639.3,593.0 637.9,592.3 636.6,591.7 635.4,591.1 634.3,590.5 633.4,590.0 632.4,589.6 631.6,589.1 630.8,588.7 630.0,588.3 629.2,587.9 628.5,587.5 627.7,587.0 626.9,586.6 626.1,586.2 625.2,585.7 624.3,585.2 623.4,584.7 622.5,584.3 621.6,583.8 620.7,583.3 619.8,582.8 618.9,582.3 618.0,581.8 617.1,581.3 616.2,580.8 615.3,580.3 614.4,579.8 613.5,579.3 612.6,578.8 611.7,578.3 610.8,577.7 609.8,577.2 608.9,576.7 607.9,576.1 607.0,575.6 606.0,575.0 605.1,574.5 604.2,573.9 603.2,573.3 602.4,572.8 601.5,572.3 600.7,571.7 599.9,571.2 599.2,570.7 598.4,570.2 597.8,569.7 597.1,569.2 596.5,568.7 595.9,568.2 595.3,567.7 594.7,567.2 594.1,566.7 593.5,566.2 592.9,565.7 592.3,565.2 591.7,564.7 591.1,564.2 590.5,563.7 589.8,563.1 589.2,562.6 588.5,562.0 587.8,561.5 587.2,560.9 586.5,560.3 585.8,559.8 585.2,559.2 584.6,558.7 583.9,558.1 583.3,557.6 582.8,557.1 582.2,556.6 581.7,556.1 581.1,555.7 580.6,555.2 580.1,554.8 579.6,554.4 579.2,554.0 578.7,553.6 578.2,553.2 577.8,552.8 577.4,552.4 577.0,552.0 576.6,551.7 576.2,551.3 575.9,550.9 575.6,550.5 575.3,550.2 575.0,549.8 574.7,549.4 574.5,549.1 574.2,548.7 574.0,548.4 573.8,548.1 573.6,547.7 573.4,547.4 573.3,547.0 573.1,546.6 573.0,546.3 572.8,545.9 572.7,545.5 572.5,545.1 572.4,544.7 572.3,544.3 572.2,543.8 572.1,543.4 572.0,543.0 571.9,542.5 571.9,542.1 571.8,541.7 571.8,541.3 571.8,540.9 571.7,540.5 571.7,540.2 571.7,539.9 571.7,539.6" fill="#c0ffc0" stroke="#151515" stroke-width="1.9" stroke-linejoin="round" shape-rendering="crispEdges"/>
<g stroke="#0c0c18" stroke-width="1" stroke-linejoin="round" fill="#9a9ab8">
<polygon points="1821.4,154.3 1831.6,155.2 1857.0,167.8 1861.9,174.3 1865.8,185.6 1864.6,193.2 1861.3,213.7 1855.9,223.4 1834.9,233.2 1826.8,236.9 1817.0,235.9 1790.0,220.2 1783.0,208.3 1783.0,202.9 1787.3,177.0 1801.4,162.1 1811.1,157.8" />
<polygon points="1801.7,162.7 1821.4,154.5 1831.6,155.4 1857.0,167.8 1856.1,173.2 1838.1,181.5 1826.8,180.6 1801.9,167.8" fill="none"/>
<polygon points="1801.9,167.8 1826.8,180.6 1822.4,187.8 1796.0,175.9" fill="none"/>
<polygon points="1801.7,162.7 1801.9,167.8 1796.0,175.9 1787.7,177.0" fill="none"/>
<polygon points="1826.8,180.6 1838.1,181.5 1842.4,190.0 1836.5,199.1 1826.2,198.6 1822.4,187.8" fill="none"/>
<polygon points="1826.2,198.6 1836.5,199.1 1831.6,227.2 1821.4,225.6" fill="none"/>
<polygon points="1838.1,181.5 1856.1,173.2 1862.4,182.9 1842.4,190.0" fill="none"/>
<polygon points="1842.4,190.0 1862.4,182.9 1861.3,213.7 1855.9,223.4 1834.9,233.2 1831.6,227.2 1836.5,199.1" fill="none"/>
<polygon points="1821.4,225.6 1831.6,227.2 1834.9,233.2 1826.8,236.9 1817.0,235.9 1813.8,230.5" fill="none"/>
<polygon points="1789.0,179.2 1796.0,175.9 1822.4,187.8 1826.2,198.6 1821.4,225.6 1813.8,230.5 1790.0,220.2 1784.6,207.2 1785.2,203.5" fill="none"/>
</g>
<text transform="translate(1804.3,207.0) rotate(24) skewX(-10) scale(1,1)" text-anchor="middle" font-family="Liberation Sans,sans-serif" font-size="13" fill="#2e2e3a" opacity=".88">TOP</text>
<text transform="translate(1852.1,210.5) rotate(-80) skewX(0) scale(1,1)" text-anchor="middle" font-family="Liberation Sans,sans-serif" font-size="10" fill="#2e2e3a" opacity=".88">RIGHT</text>
<text transform="translate(1830.5,162.4) rotate(203) skewX(25) scale(1.05,1)" text-anchor="middle" font-family="Liberation Sans,sans-serif" font-size="8.5" fill="#2e2e3a" opacity=".88">REAR</text>
<line x1="1812.7" y1="203.8" x2="1820.8" y2="159.7" stroke="#4cf24c" stroke-width="1.7" stroke-linecap="round"/>
<line x1="1812.7" y1="204.5" x2="1851.6" y2="224.0" stroke="#f26b6b" stroke-width="1.6" stroke-linecap="round"/>
<line x1="1812.7" y1="204.9" x2="1787.9" y2="214.6" stroke="#5a5af0" stroke-width="1.600" stroke-linecap="round"/>
<line x1="1787.9" y1="214.6" x2="1781.4" y2="217.0" stroke="#0000e6" stroke-width="2.4" stroke-linecap="round"/>
<g stroke="#1a1a30" stroke-width=".8" stroke-linejoin="round" fill="#9a9ab8">
<polygon points="1823.8,130.3 1812.2,143.5 1835.6,143.5" />
<polygon points="1812.2,248.6 1835.6,248.6 1823.9,261.6" />
<polygon points="1758.1,195.9 1771.9,184.1 1771.9,207.7" />
<polygon points="1889.7,195.9 1876.2,184.1 1876.2,207.7" />
<circle cx="1881" cy="138.400" r="6.500"/>
<polygon points="1806.0,137.1 1802.9,138.1 1799.9,139.3 1797.0,140.6 1794.1,142.1 1791.4,143.8 1788.7,145.5 1786.1,147.5 1783.6,149.5 1781.0,146.6 1774.7,164.6 1789.6,160.4 1787.7,155.6 1788.4,155.0 1790.6,153.2 1792.9,151.5 1795.2,150.0 1797.7,148.5 1800.2,147.2 1802.8,146.0 1805.4,145.0 1808.1,144.1 1808.1,144.1" />
<polygon points="1842.0,137.1 1845.1,138.1 1848.1,139.3 1851.0,140.6 1853.9,142.1 1856.6,143.8 1859.3,145.5 1861.9,147.5 1864.4,149.5 1867.0,146.6 1873.3,164.6 1858.4,160.4 1860.3,155.6 1859.6,155.0 1857.4,153.2 1855.1,151.5 1852.8,150.0 1850.3,148.5 1847.8,147.2 1845.2,146.0 1842.6,145.0 1839.9,144.1 1839.9,144.1" />
<polygon points="1868.4,232.9 1878.8,237.2 1878.8,248.4 1868.4,252.9 1858.6,248.4 1858.6,237.2" />
<path d="M1858.600 237.200 1868.400 241.500 1878.800 237.200M1868.400 241.500V252.900" fill="none"/>
</g>
<g font-family="Liberation Sans,sans-serif" font-weight="bold" font-size="9.500" fill="#000">
<path d="M1860.500 805 1864.600 782" stroke="#1a8f1a" stroke-width="1.300"/><path d="M1864.800 781.500 1861.600 790.500 1865.600 791z" fill="#1a8f1a"/>
<path d="M1860.500 805 1882.500 816" stroke="#8e1a1a" stroke-width="1.300"/><path d="M1883 816.300 1874.300 810 1872.800 814z" fill="#8e1a1a"/>
<path d="M1860.500 805 1842 812.600" stroke="#1a1a8e" stroke-width="1.300"/><path d="M1842 812.600 1850.300 807.300 1851.300 811.300z" fill="#1a1a8e"/>
<text x="1866" y="779.500">Y</text><text x="1883.300" y="815.500">X</text><text x="1842.800" y="811.500">Z</text>
</g>
</svg>
<!-- MDI tabs -->
<div class="abs" style="left:421px;top:842px;width:110px;height:21px;box-sizing:border-box;background:#f0f0f0;border:1px solid #e3e3e3;border-top:none"></div>
<div class="abs" style="left:531px;top:841px;width:132px;height:23px;box-sizing:border-box;background:#fbfbfb;border:1px solid #e6e6e6;border-top:none"></div>
<svg class="abs" style="left:430px;top:843px;overflow:visible" width="17.46" height="15.52" viewBox="0 0 18 16"><path d="M.8 .4H9.300V3.500H4.300V5.700H8V8.500H4.300V15.500H.8z" fill="#e81c1c" stroke="#8a0f0f" stroke-width=".7" stroke-linejoin="round"/><path d="M1.500 1.100H8.600" stroke="#ff5a4a" stroke-width=".6"/><g transform="translate(10.400,10) scale(.93)"><path d="M-0.89 -5.63 0.89 -5.63 1.01 -3.77 1.95 -3.38 3.35 -4.61 4.61 -3.35 3.38 -1.95 3.77 -1.01 5.63 -0.89 5.63 0.89 3.77 1.01 3.38 1.95 4.61 3.35 3.35 4.61 1.95 3.38 1.01 3.77 0.89 5.63 -0.89 5.63 -1.01 3.77 -1.95 3.38 -3.35 4.61 -4.61 3.35 -3.38 1.95 -3.77 1.01 -5.63 0.89 -5.63 -0.89 -3.77 -1.01 -3.38 -1.95 -4.61 -3.35 -3.35 -4.61 -1.95 -3.38 -1.01 -3.77z" fill="#4a7cbc" stroke="#1f417c" stroke-width=".7" stroke-linejoin="round"/><circle r="1.700" fill="#fafafa" stroke="#1f417c" stroke-width=".5"/></g></svg>
<div class="t" style="left:449px;top:847px;letter-spacing:-.05px">Start page</div>
<svg class="abs" style="left:505px;top:845.5px" width="14" height="14" viewBox="0 0 14 14"><rect x=".5" y=".5" width="13" height="13" rx="1.500" fill="#d3d3d3" stroke="#a9a9a9"/><path d="M4 4 10 10M10 4 4 10" stroke="#fbfbfb" stroke-width="2"/></svg>
<svg class="abs" style="left:545px;top:843.5px;overflow:visible" width="17.46" height="15.52" viewBox="0 0 18 16"><path d="M.8 .4H9.300V3.500H4.300V5.700H8V8.500H4.300V15.500H.8z" fill="#e81c1c" stroke="#8a0f0f" stroke-width=".7" stroke-linejoin="round"/><path d="M1.500 1.100H8.600" stroke="#ff5a4a" stroke-width=".6"/><g transform="translate(10.400,10) scale(.93)"><path d="M-0.89 -5.63 0.89 -5.63 1.01 -3.77 1.95 -3.38 3.35 -4.61 4.61 -3.35 3.38 -1.95 3.77 -1.01 5.63 -0.89 5.63 0.89 3.77 1.01 3.38 1.95 4.61 3.35 3.35 4.61 1.95 3.38 1.01 3.77 0.89 5.63 -0.89 5.63 -1.01 3.77 -1.95 3.38 -3.35 4.61 -4.61 3.35 -3.38 1.95 -3.77 1.01 -5.63 0.89 -5.63 -0.89 -3.77 -1.01 -3.38 -1.95 -4.61 -3.35 -3.35 -4.61 -1.95 -3.38 -1.01 -3.77z" fill="#4a7cbc" stroke="#1f417c" stroke-width=".7" stroke-linejoin="round"/><circle r="1.700" fill="#fafafa" stroke="#1f417c" stroke-width=".5"/></g></svg>
<div class="t" style="left:564px;top:847.5px;letter-spacing:.1px">Unnamed : 1*</div>
<svg class="abs" style="left:636px;top:846px" width="14" height="14" viewBox="0 0 14 14"><rect x=".5" y=".5" width="13" height="13" rx="1.500" fill="#e0603a" stroke="#b84626"/><path d="M4 4 10 10M10 4 4 10" stroke="#fff" stroke-width="2"/></svg>
</body></html>
